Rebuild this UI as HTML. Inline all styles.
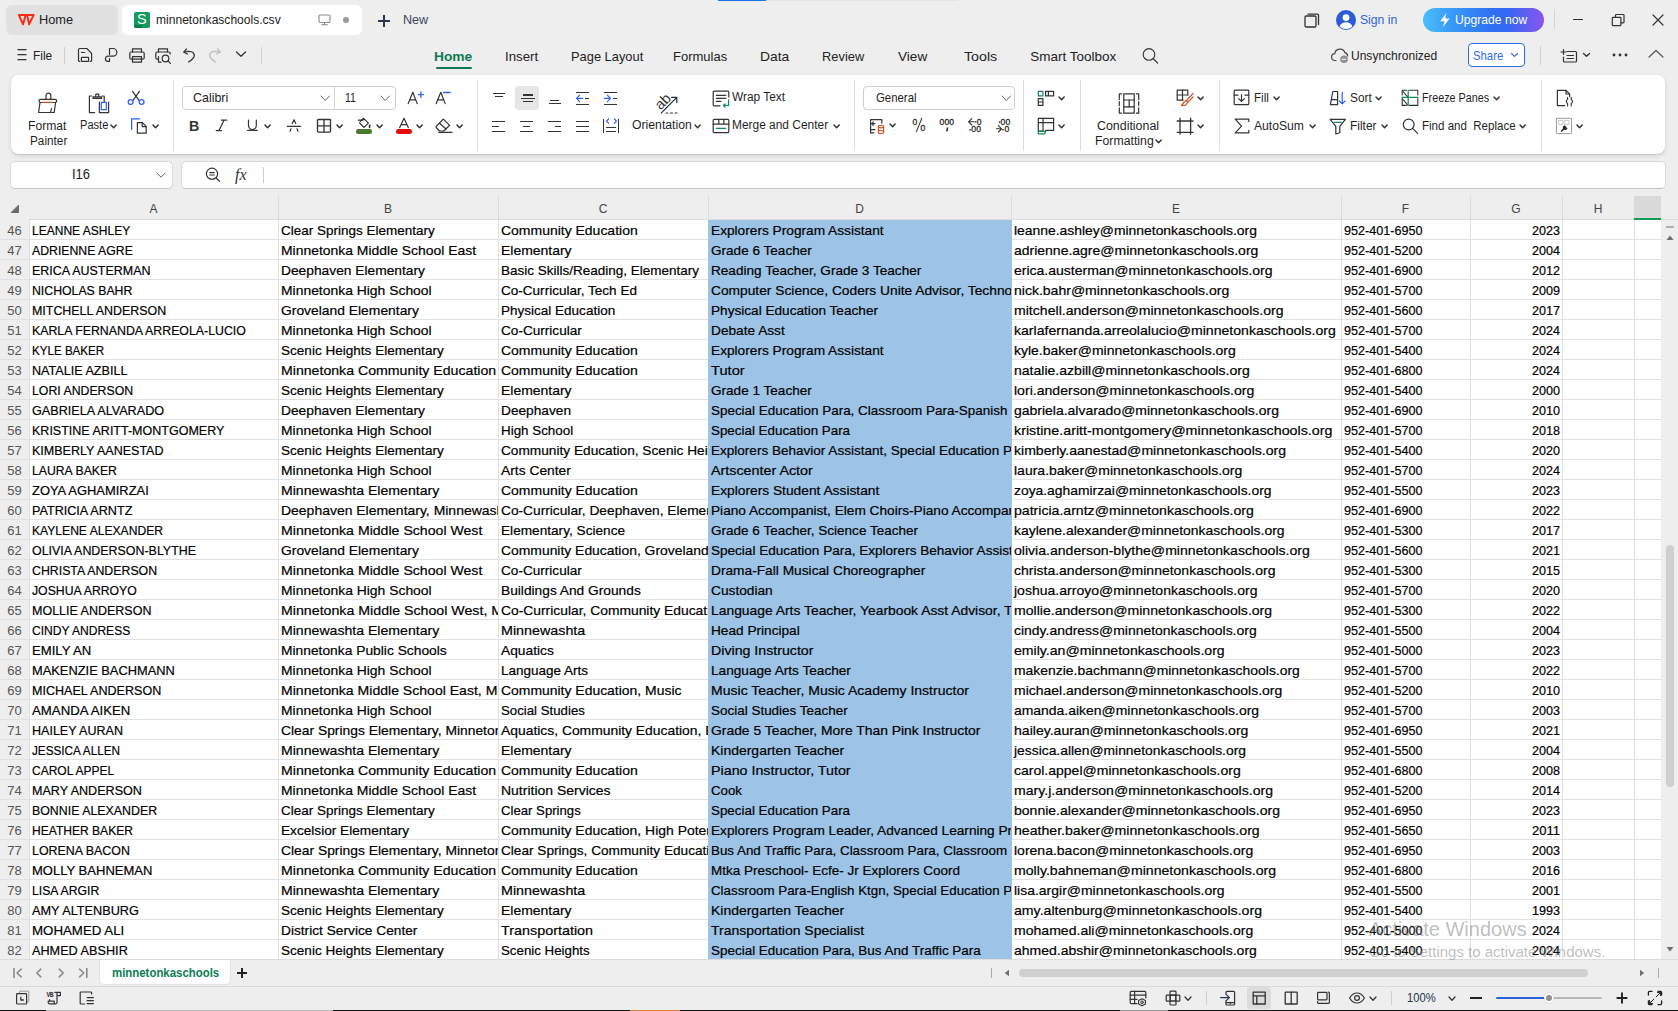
<!DOCTYPE html>
<html><head><meta charset="utf-8">
<style>
*{box-sizing:border-box;margin:0;padding:0}
html,body{width:1678px;height:1011px;overflow:hidden}
body{position:relative;background:#eeeeee;font-family:"Liberation Sans",sans-serif;color:#222}
.a{position:absolute}
svg{position:absolute;overflow:visible}
.t{position:absolute;white-space:pre;font-size:13px;color:#1f1f1f;line-height:1;transform-origin:0 0}
/* grid */
#grid{position:absolute;left:0;top:196px;width:1661px;height:764px;background:#fff;overflow:hidden}
.c{position:absolute;height:19px;overflow:hidden;white-space:nowrap}
.c span{position:absolute;left:2px;top:2px;font-size:13.5px;line-height:17px;color:#000;transform-origin:0 0;-webkit-text-stroke:0.2px #000}
.c span.r{left:auto;right:2px;transform-origin:100% 0}
.rh{position:absolute;left:0;width:29px;height:19px;text-align:center;font-size:13px;line-height:21px;color:#555}
.hl{position:absolute;left:0;width:1661px;height:1px;background:#e1e1e1}
.vl{position:absolute;top:0;width:1px;height:960px;background:#e1e1e1}
.ch{position:absolute;top:2px;height:23px;font-size:12px;line-height:23px;text-align:center;color:#444}
</style></head>
<body>
<div class="a" style="left:718px;top:0px;width:48px;height:1px;background:#1a73e8;"></div>
<div class="a" style="left:766px;top:0px;width:192px;height:1px;background:#e4e4e4;"></div>
<div class="a" style="left:6px;top:5px;width:112px;height:30px;background:#e1e1e1;border-radius:6px"></div>
<svg style="left:16px;top:12px;" width="20" height="16" viewBox="0 0 20 16" fill="none" stroke-linecap="round" stroke-linejoin="round"><path d="M2.9 3H9.6L7 12.4Z M11.2 3H17.6L13.1 12.4Z" stroke="#fa2a12" stroke-width="1.9"/></svg>
<div class="t" style="left:39.35px;top:13.00px;font-size:13px;color:#222;transform:scaleX(0.9851);">Home</div>
<div class="a" style="left:122px;top:5px;width:240px;height:30px;background:#fff;border-radius:6px"></div>
<div class="a" style="left:134px;top:12px;width:16px;height:16px;background:#139a5c;border-radius:2px"></div>
<div class="a" style="left:134px;top:25px;width:8px;height:3px;background:#0d7a47;border-radius:0 0 0 2px"></div>
<div class="t" style="left:137.10px;top:12.15px;font-size:14px;color:#fff;transform:scaleX(1.0338);">S</div>
<div class="t" style="left:155.85px;top:13.00px;font-size:13px;color:#222;transform:scaleX(0.9276);">minnetonkaschools.csv</div>
<svg style="left:318px;top:14px;" width="13" height="12" viewBox="0 0 13 12" fill="none" stroke-linecap="round" stroke-linejoin="round"><rect x="1" y="1" width="11" height="7.5" rx="1" stroke="#8a8a8a" stroke-width="1.1"/><path d="M6.5 8.5V10.5M3.5 10.8H9.5" stroke="#8a8a8a" stroke-width="1.1"/></svg>
<div class="a" style="left:343px;top:17px;width:6px;height:6px;background:#9a9a9a;border-radius:50%"></div>
<svg style="left:376px;top:13px;" width="16" height="16" viewBox="0 0 16 16" fill="none" stroke-linecap="round" stroke-linejoin="round"><path d="M8 2V14M2 8H14" stroke="#30364f" stroke-width="2" stroke-linecap="butt"/></svg>
<div class="t" style="left:403.35px;top:13.00px;font-size:13px;color:#3a4560;transform:scaleX(0.9675);">New</div>
<svg style="left:1303px;top:12px;" width="18" height="16" viewBox="0 0 18 16" fill="none" stroke-linecap="round" stroke-linejoin="round"><rect x="2" y="4" width="11" height="11" rx="1.2" stroke="#333" stroke-width="1.3"/><path d="M5 2.2H14.5A1 1 0 0 1 15.5 3.2V12.5" stroke="#333" stroke-width="1.3"/></svg>
<svg style="left:1335px;top:9px;" width="22" height="22" viewBox="0 0 22 22" fill="none" stroke-linecap="round" stroke-linejoin="round"><circle cx="11" cy="11" r="10" fill="#2b5bd8"/><circle cx="11" cy="8.6" r="3.4" fill="#fff"/><path d="M4.6 17.2C5.8 14.3 8 13.2 11 13.2S16.2 14.3 17.4 17.2C15.8 19 13.6 20 11 20S6.2 19 4.6 17.2Z" fill="#fff"/></svg>
<div class="t" style="left:1360.33px;top:12.57px;font-size:13.5px;color:#2e62d9;transform:scaleX(0.9015);">Sign in</div>
<div class="a" style="left:1423px;top:8px;width:121px;height:24px;background:linear-gradient(90deg,#48c0fb 0%,#3a9cf7 22%,#2f72f4 55%,#3466f3 70%,#8a56ef 100%);border-radius:12px"></div>
<svg style="left:1438px;top:12px;" width="14" height="16" viewBox="0 0 14 16" fill="none" stroke-linecap="round" stroke-linejoin="round"><path d="M8.6 0.8L2.2 9.2H6.6L4.8 15.2L11.6 6.4H7.2Z" fill="#fff"/></svg>
<div class="t" style="left:1455.33px;top:12.57px;font-size:13.5px;color:#fff;transform:scaleX(0.8992);">Upgrade now</div>
<div class="a" style="left:1554px;top:9px;width:1px;height:20px;background:#d3d3d3;"></div>
<div class="a" style="left:1573px;top:19px;width:10px;height:1.3px;background:#333;"></div>
<svg style="left:1610px;top:12px;" width="16" height="16" viewBox="0 0 16 16" fill="none" stroke-linecap="round" stroke-linejoin="round"><rect x="2.3" y="5.3" width="8.6" height="8.4" rx="0.8" stroke="#333" stroke-width="1.2"/><path d="M5.5 5.3V3.3A0.8 0.8 0 0 1 6.3 2.5H13.2A0.8 0.8 0 0 1 14 3.3V10A0.8 0.8 0 0 1 13.2 10.8H10.9" stroke="#333" stroke-width="1.2"/></svg>
<svg style="left:1651px;top:13px;" width="14" height="14" viewBox="0 0 14 14" fill="none" stroke-linecap="round" stroke-linejoin="round"><path d="M2 2L12 12M12 2L2 12" stroke="#333" stroke-width="1.2"/></svg>
<svg style="left:16px;top:47px;" width="12" height="15" viewBox="0 0 12 15" fill="none" stroke-linecap="round" stroke-linejoin="round"><path d="M2 2.6H10M2 7.7H10M2 12.7H10" stroke="#333" stroke-width="1.3"/></svg>
<div class="t" style="left:33.33px;top:48.57px;font-size:13.5px;color:#222;transform:scaleX(0.8828);">File</div>
<div class="a" style="left:64px;top:47px;width:1px;height:17px;background:#d0d0d0;"></div>
<svg style="left:76px;top:47px;" width="18" height="17" viewBox="0 0 18 17" fill="none" stroke-linecap="round" stroke-linejoin="round"><path d="M3.6 14.4H3.7A1.2 1.2 0 0 1 2.5 13.2V2.7A1.2 1.2 0 0 1 3.7 1.5H10.8L15.6 6.3V13.2A1.2 1.2 0 0 1 14.4 14.4H14.2" stroke="#333" stroke-width="1.2"/><rect x="5.4" y="10.4" width="7.2" height="4" rx="0.5" stroke="#333" stroke-width="1.2"/><path d="M5.4 5.5H8.6" stroke="#333" stroke-width="1.2"/></svg>
<svg style="left:103px;top:47px;" width="16" height="17" viewBox="0 0 16 17" fill="none" stroke-linecap="round" stroke-linejoin="round"><path d="M6.5 7.5V1.5H10A3.85 3.85 0 0 1 10 9.2H5A2.6 2.6 0 0 0 5 14.4H6.5V11.6" stroke="#333" stroke-width="1.2"/></svg>
<svg style="left:128px;top:47px;" width="18" height="17" viewBox="0 0 18 17" fill="none" stroke-linecap="round" stroke-linejoin="round"><path d="M4.5 5V1.8H13.5V5" stroke="#333" stroke-width="1.2"/><rect x="1.8" y="5" width="14.4" height="7.2" rx="1.5" stroke="#333" stroke-width="1.2"/><rect x="4.5" y="9.6" width="9" height="5.6" stroke="#333" stroke-width="1.2"/></svg>
<svg style="left:154px;top:47px;" width="19" height="18" viewBox="0 0 19 18" fill="none" stroke-linecap="round" stroke-linejoin="round"><path d="M4.5 5V1.8H13.5V5" stroke="#333" stroke-width="1.2"/><path d="M4.2 12.2H3.2A1.5 1.5 0 0 1 1.8 10.7V6.5A1.5 1.5 0 0 1 3.3 5H14.7A1.5 1.5 0 0 1 16.2 6.5V7" stroke="#333" stroke-width="1.2"/><path d="M4.5 9.6V15.2H7" stroke="#333" stroke-width="1.2"/><circle cx="11.5" cy="11.5" r="3.3" stroke="#333" stroke-width="1.2"/><path d="M13.9 13.9L16.4 16.4" stroke="#333" stroke-width="1.3"/></svg>
<svg style="left:182px;top:47px;" width="14" height="17" viewBox="0 0 14 17" fill="none" stroke-linecap="round" stroke-linejoin="round"><path d="M4.5 2L1.8 5.2L5.4 7" stroke="#333" stroke-width="1.2"/><path d="M2.2 5.2C8 3.2 12.5 5 12.3 8.6C12.2 11 10.4 12.4 6.6 15" stroke="#333" stroke-width="1.2"/></svg>
<svg style="left:208px;top:47px;" width="14" height="17" viewBox="0 0 14 17" fill="none" stroke-linecap="round" stroke-linejoin="round"><path d="M9.5 2L12.2 5.2L8.6 7" stroke="#b9b9b9" stroke-width="1.2"/><path d="M11.8 5.2C6 3.2 1.5 5 1.7 8.6C1.8 11 3.6 12.4 7.4 15" stroke="#b9b9b9" stroke-width="1.2"/></svg>
<svg style="left:235px;top:50px;" width="12" height="8" viewBox="0 0 12 8" fill="none" stroke-linecap="round" stroke-linejoin="round"><path d="M1.5 2L6 6.3L10.5 2" stroke="#333" stroke-width="1.3"/></svg>
<div class="a" style="left:261px;top:47px;width:1px;height:17px;background:#d0d0d0;"></div>
<div class="t" style="left:434.32px;top:49.57px;font-size:13.5px;color:#0c7a52;font-weight:bold;transform:scaleX(1.0186);">Home</div>
<div class="a" style="left:436px;top:67px;width:36px;height:2px;background:#0c7a52;border-radius:1px"></div>
<div class="t" style="left:505.32px;top:49.57px;font-size:13.5px;color:#222;transform:scaleX(0.9837);">Insert</div>
<div class="t" style="left:571.33px;top:49.57px;font-size:13.5px;color:#222;transform:scaleX(0.9525);">Page Layout</div>
<div class="t" style="left:673.33px;top:49.57px;font-size:13.5px;color:#222;transform:scaleX(0.9636);">Formulas</div>
<div class="t" style="left:760.33px;top:49.57px;font-size:13.5px;color:#222;transform:scaleX(1.0240);">Data</div>
<div class="t" style="left:822.33px;top:49.57px;font-size:13.5px;color:#222;transform:scaleX(0.9537);">Review</div>
<div class="t" style="left:898.33px;top:49.57px;font-size:13.5px;color:#222;transform:scaleX(1.0063);">View</div>
<div class="t" style="left:964.33px;top:49.57px;font-size:13.5px;color:#222;transform:scaleX(1.0539);">Tools</div>
<div class="t" style="left:1030.33px;top:49.57px;font-size:13.5px;color:#222;">Smart Toolbox</div>
<svg style="left:1141px;top:47px;" width="19" height="19" viewBox="0 0 19 19" fill="none" stroke-linecap="round" stroke-linejoin="round"><circle cx="8" cy="7.4" r="5.8" stroke="#333" stroke-width="1.1"/><path d="M12.2 11.6L16.6 16" stroke="#333" stroke-width="1.2"/></svg>
<svg style="left:1331px;top:46px;" width="20" height="18" viewBox="0 0 20 18" fill="none" stroke-linecap="round" stroke-linejoin="round"><path d="M5 14.5H4.2A3.4 3.4 0 0 1 3.8 7.7A5.2 5.2 0 0 1 13.9 6.6A3.6 3.6 0 0 1 16.6 10" stroke="#444" stroke-width="1.2"/><circle cx="13" cy="13.2" r="3.8" fill="#8f8f8f"/><path d="M11.2 13.2H14.8" stroke="#fff" stroke-width="1.1"/></svg>
<div class="t" style="left:1351.33px;top:48.57px;font-size:13.5px;color:#222;transform:scaleX(0.8905);">Unsynchronized</div>
<div class="a" style="left:1468px;top:43px;width:57px;height:24px;background:#fff;border:1.2px solid #2f6bf0;border-radius:4px"></div>
<div class="t" style="left:1473.33px;top:48.57px;font-size:13.5px;color:#2f6bf0;transform:scaleX(0.8386);">Share</div>
<svg style="left:1510px;top:52px;" width="9" height="6" viewBox="0 0 9 6" fill="none" stroke-linecap="round" stroke-linejoin="round"><path d="M1.5 1.5L4.5 4.3L7.5 1.5" stroke="#2f6bf0" stroke-width="1.1"/></svg>
<div class="a" style="left:1540px;top:46px;width:1px;height:19px;background:#d0d0d0;"></div>
<svg style="left:1560px;top:47px;" width="20" height="17" viewBox="0 0 20 17" fill="none" stroke-linecap="round" stroke-linejoin="round"><path d="M3.5 2.5V7.5M1 5H6" stroke="#333" stroke-width="1.2"/><path d="M7 4.5H15.5A1 1 0 0 1 16.5 5.5V14A1 1 0 0 1 15.5 15H4.5A1 1 0 0 1 3.5 14V10" stroke="#333" stroke-width="1.2"/><path d="M7 8.5H13.5M7 11.5H13.5" stroke="#333" stroke-width="1.2"/></svg>
<svg style="left:1582px;top:52px;" width="9" height="6" viewBox="0 0 9 6" fill="none" stroke-linecap="round" stroke-linejoin="round"><path d="M1.5 1.5L4.5 4.3L7.5 1.5" stroke="#333" stroke-width="1.3"/></svg>
<svg style="left:1611px;top:52px;" width="18" height="6" viewBox="0 0 18 6" fill="none" stroke-linecap="round" stroke-linejoin="round"><circle cx="3" cy="3" r="1.4" fill="#333"/><circle cx="9" cy="3" r="1.4" fill="#333"/><circle cx="15" cy="3" r="1.4" fill="#333"/></svg>
<svg style="left:1647px;top:49px;" width="18" height="10" viewBox="0 0 18 10" fill="none" stroke-linecap="round" stroke-linejoin="round"><path d="M2 8L9 1.5L16 8" stroke="#555" stroke-width="1.2"/></svg>

<div class="a" style="left:11px;top:75px;width:1654px;height:79px;background:#fff;border-radius:8px;box-shadow:0 1px 1px rgba(0,0,0,0.10),0 2px 5px rgba(0,0,0,0.10)"></div>
<div class="a" style="left:0;top:0.8px;width:1678px;height:160px">
<svg style="left:36px;top:90px;" width="24" height="24" viewBox="0 0 24 24" fill="none" stroke-linecap="round" stroke-linejoin="round"><path d="M10 8.2V4.5A2.4 2.4 0 0 1 14.8 4.5V8.2" stroke="#333" stroke-width="1.2"/><rect x="3" y="8.3" width="17.6" height="3.2" rx="1.4" stroke="#333" stroke-width="1.2"/><path d="M4 11.5L2.6 21.5H18.2L19.6 11.5" stroke="#333" stroke-width="1.2"/><path d="M15.5 17.6L14.6 21.3" stroke="#333" stroke-width="1.2"/><path d="M7 11.4H16.4" stroke="#d2501c" stroke-width="1.2"/></svg>
<div class="t" style="left:28.07px;top:119.42px;font-size:12.5px;color:#1f1f1f;transform:scaleX(0.9705);">Format</div>
<div class="t" style="left:30.07px;top:134.42px;font-size:12.5px;color:#1f1f1f;transform:scaleX(0.9423);">Painter</div>
<svg style="left:87px;top:90px;" width="24" height="24" viewBox="0 0 24 24" fill="none" stroke-linecap="round" stroke-linejoin="round"><path d="M4.6 5H2.4V21.6H7.6" stroke="#333" stroke-width="1.2"/><path d="M15.2 5H17.2V10.8" stroke="#333" stroke-width="1.2"/><path d="M6 5.8H14.6V7.4H6Z" stroke="#333" stroke-width="1.2"/><path d="M8.8 5.4V3.2H11.8V5.4" stroke="#333" stroke-width="1.2"/><path d="M12.4 11V21.6H21.6V11" stroke="#333" stroke-width="1.2"/><rect x="14.3" y="11.4" width="5" height="7.3" stroke="#2962ff" stroke-width="1.2"/></svg>
<div class="t" style="left:80.17px;top:118.42px;font-size:12.5px;color:#1f1f1f;transform:scaleX(0.8860);">Paste</div>
<svg style="left:110.2px;top:123px;" width="7.2" height="4.8" viewBox="0 0 7.2 4.8" fill="none" stroke-linecap="round" stroke-linejoin="round"><path d="M1 1L3.6 3.8L6.2 1" stroke="#333" stroke-width="1.45"/></svg>
<svg style="left:127px;top:88px;" width="18" height="18" viewBox="0 0 18 18" fill="none" stroke-linecap="round" stroke-linejoin="round"><path d="M5.6 2.3L11.8 11.2M12.4 2.3L6.2 11.2" stroke="#333" stroke-width="1.2"/><circle cx="3.6" cy="13" r="2.4" stroke="#2962ff" stroke-width="1.3"/><circle cx="14.6" cy="13" r="2.4" stroke="#2962ff" stroke-width="1.3"/></svg>
<svg style="left:129px;top:115px;" width="20" height="20" viewBox="0 0 20 20" fill="none" stroke-linecap="round" stroke-linejoin="round"><path d="M2.6 13.6V2.8H10.6" stroke="#2962ff" stroke-width="1.3"/><path d="M8.4 6.6H13.4L17.2 10.4V17.2H8.4Z" stroke="#333" stroke-width="1.2"/><path d="M13.2 6.8V10.6H17" stroke="#333" stroke-width="1.2"/></svg>
<svg style="left:151.7px;top:123.2px;" width="7.2" height="4.8" viewBox="0 0 7.2 4.8" fill="none" stroke-linecap="round" stroke-linejoin="round"><path d="M1 1L3.6 3.8L6.2 1" stroke="#333" stroke-width="1.45"/></svg>
<div class="a" style="left:173px;top:79px;width:1px;height:71px;background:#dedede;"></div>
<div class="a" style="left:182px;top:85px;width:214px;height:24px;background:#fff;border:1px solid #cfcfcf;border-radius:4px"></div>
<div class="a" style="left:334px;top:86px;width:1px;height:22px;background:#d6d6d6;"></div>
<div class="t" style="left:193.32px;top:90.57px;font-size:13.5px;color:#222;transform:scaleX(0.9203);">Calibri</div>
<svg style="left:319.6px;top:93.8px;" width="10.5" height="6.5" viewBox="0 0 10.5 6.5" fill="none" stroke-linecap="round" stroke-linejoin="round"><path d="M1 1L5.25 5.5L9.5 1" stroke="#666" stroke-width="1"/></svg>
<div class="t" style="left:345.12px;top:90.57px;font-size:13.5px;color:#222;transform:scaleX(0.7716);">11</div>
<svg style="left:379.9px;top:93.8px;" width="10.5" height="6.5" viewBox="0 0 10.5 6.5" fill="none" stroke-linecap="round" stroke-linejoin="round"><path d="M1 1L5.25 5.5L9.5 1" stroke="#666" stroke-width="1"/></svg>
<svg style="left:406px;top:88px;" width="18" height="17" viewBox="0 0 18 17" fill="none" stroke-linecap="round" stroke-linejoin="round"><path d="M2.2 14.6L6.8 3.3L11.2 14.6M3.8 10.8H9.8" stroke="#333" stroke-width="1.2"/><path d="M12.4 5.6H17.4M14.9 3V8.4" stroke="#2962ff" stroke-width="1.3"/></svg>
<svg style="left:434px;top:88px;" width="18" height="17" viewBox="0 0 18 17" fill="none" stroke-linecap="round" stroke-linejoin="round"><path d="M2.2 14.6L6.8 3.3L11.2 14.6M3.8 10.8H9.8" stroke="#333" stroke-width="1.2"/><path d="M9.6 3.5H16.2" stroke="#2962ff" stroke-width="1.3"/></svg>
<div class="t" style="left:188.88px;top:117.73px;font-size:14.5px;color:#333;font-weight:bold;transform:scaleX(0.9829);">B</div>
<svg style="left:214px;top:117px;" width="15" height="15" viewBox="0 0 15 15" fill="none" stroke-linecap="round" stroke-linejoin="round"><path d="M7.3 2.2H12.8M2.2 12.6H7.6M10 2.2L5 12.6" stroke="#333" stroke-width="1.2"/></svg>
<svg style="left:246px;top:117px;" width="13" height="15" viewBox="0 0 13 15" fill="none" stroke-linecap="round" stroke-linejoin="round"><path d="M2.5 2V7.6A3.9 3.9 0 0 0 10.3 7.6V2" stroke="#333" stroke-width="1.2"/><path d="M1.5 12.3H11.3" stroke="#333" stroke-width="1.2"/></svg>
<svg style="left:263.9px;top:122.9px;" width="7.2" height="4.8" viewBox="0 0 7.2 4.8" fill="none" stroke-linecap="round" stroke-linejoin="round"><path d="M1 1L3.6 3.8L6.2 1" stroke="#333" stroke-width="1.45"/></svg>
<svg style="left:286px;top:117px;" width="16" height="16" viewBox="0 0 16 16" fill="none" stroke-linecap="round" stroke-linejoin="round"><path d="M6.2 5.5L8 1.8L9.8 5.5M1.4 8.4H14.6M5 10.8L4 13.2M11 10.8L12 13.2" stroke="#333" stroke-width="1.2"/></svg>
<svg style="left:316px;top:117px;" width="16" height="16" viewBox="0 0 16 16" fill="none" stroke-linecap="round" stroke-linejoin="round"><rect x="1.5" y="1.5" width="13" height="12.6" rx="0.8" stroke="#333" stroke-width="1.3"/><path d="M8 1.5V14.1M1.5 7.8H14.5" stroke="#333" stroke-width="1.3"/></svg>
<svg style="left:336px;top:123px;" width="7.2" height="4.8" viewBox="0 0 7.2 4.8" fill="none" stroke-linecap="round" stroke-linejoin="round"><path d="M1 1L3.6 3.8L6.2 1" stroke="#333" stroke-width="1.45"/></svg>
<svg style="left:355px;top:115px;" width="18" height="13" viewBox="0 0 18 13" fill="none" stroke-linecap="round" stroke-linejoin="round"><path d="M5.2 5.5L8.6 2.3L13.4 7.1L9 11.4L4.6 7" stroke="#333" stroke-width="1.2"/><path d="M3.3 4.2H8" stroke="#333" stroke-width="1.2"/><path d="M14.6 9.3V11.4" stroke="#333" stroke-width="1.6"/></svg>
<div class="a" style="left:356px;top:128.2px;width:16px;height:4.6px;background:#4a7a2c;border-radius:2.3px"></div>
<svg style="left:376px;top:123px;" width="7.2" height="4.8" viewBox="0 0 7.2 4.8" fill="none" stroke-linecap="round" stroke-linejoin="round"><path d="M1 1L3.6 3.8L6.2 1" stroke="#333" stroke-width="1.45"/></svg>
<svg style="left:397px;top:115px;" width="14" height="13" viewBox="0 0 14 13" fill="none" stroke-linecap="round" stroke-linejoin="round"><path d="M2.6 11.7L7 2.2L11.4 11.7M4.2 8.6H9.8" stroke="#333" stroke-width="1.2"/></svg>
<div class="a" style="left:396px;top:128.2px;width:16px;height:4.6px;background:#e80a0a;border-radius:2.3px"></div>
<svg style="left:416.2px;top:123px;" width="7.2" height="4.8" viewBox="0 0 7.2 4.8" fill="none" stroke-linecap="round" stroke-linejoin="round"><path d="M1 1L3.6 3.8L6.2 1" stroke="#333" stroke-width="1.45"/></svg>
<svg style="left:434px;top:116px;" width="20" height="18" viewBox="0 0 20 18" fill="none" stroke-linecap="round" stroke-linejoin="round"><path d="M9.6 2.3L15.6 8.3L9.8 14H5.6L2.6 11A1.4 1.4 0 0 1 2.6 9L9 2.3A0.8 0.8 0 0 1 9.6 2.3Z" stroke="#333" stroke-width="1.2"/><path d="M5.6 6.2L12 12" stroke="#333" stroke-width="1.2"/><path d="M4.8 15.4H18" stroke="#333" stroke-width="1.2"/></svg>
<svg style="left:456.2px;top:123px;" width="7.2" height="4.8" viewBox="0 0 7.2 4.8" fill="none" stroke-linecap="round" stroke-linejoin="round"><path d="M1 1L3.6 3.8L6.2 1" stroke="#333" stroke-width="1.45"/></svg>
<div class="a" style="left:477px;top:79px;width:1px;height:71px;background:#dedede;"></div>
<div class="a" style="left:515px;top:85px;width:24px;height:24px;background:#e6e6e6;border-radius:4px"></div>
<div class="a" style="left:493px;top:91.9px;width:12px;height:1.2px;background:#333;"></div>
<div class="a" style="left:495px;top:94.9px;width:8px;height:1.2px;background:#333;"></div>
<div class="a" style="left:523px;top:93.60000000000001px;width:10px;height:1.2px;background:#333;"></div>
<div class="a" style="left:521px;top:96.80000000000001px;width:14px;height:1.2px;background:#333;"></div>
<div class="a" style="left:523px;top:99.9px;width:10px;height:1.2px;background:#333;"></div>
<div class="a" style="left:550px;top:98.80000000000001px;width:9px;height:1.2px;background:#333;"></div>
<div class="a" style="left:549px;top:101.80000000000001px;width:12px;height:1.2px;background:#333;"></div>
<div class="a" style="left:576px;top:90.80000000000001px;width:13px;height:1.2px;background:#333;"></div>
<div class="a" style="left:585px;top:96.80000000000001px;width:4px;height:1.2px;background:#333;"></div>
<div class="a" style="left:576px;top:102.80000000000001px;width:13px;height:1.2px;background:#333;"></div>
<svg style="left:575px;top:93px;" width="10" height="9" viewBox="0 0 10 9" fill="none" stroke-linecap="round" stroke-linejoin="round"><path d="M4.6 1.2L1.6 4.4L4.6 7.6M1.6 4.4H7.6" stroke="#2962ff" stroke-width="1.2"/></svg>
<div class="a" style="left:604px;top:90.80000000000001px;width:13px;height:1.2px;background:#333;"></div>
<div class="a" style="left:613px;top:96.80000000000001px;width:4px;height:1.2px;background:#333;"></div>
<div class="a" style="left:604px;top:102.80000000000001px;width:13px;height:1.2px;background:#333;"></div>
<svg style="left:603px;top:93px;" width="10" height="9" viewBox="0 0 10 9" fill="none" stroke-linecap="round" stroke-linejoin="round"><path d="M4.4 1.2L7.4 4.4L4.4 7.6M1.4 4.4H7.4" stroke="#2962ff" stroke-width="1.2"/></svg>
<div class="a" style="left:492px;top:119.80000000000001px;width:13px;height:1.2px;background:#333;"></div>
<div class="a" style="left:492px;top:124.9px;width:7px;height:1.2px;background:#333;"></div>
<div class="a" style="left:492px;top:129.9px;width:13px;height:1.2px;background:#333;"></div>
<div class="a" style="left:520px;top:119.80000000000001px;width:13px;height:1.2px;background:#333;"></div>
<div class="a" style="left:523px;top:124.9px;width:7px;height:1.2px;background:#333;"></div>
<div class="a" style="left:520px;top:129.9px;width:13px;height:1.2px;background:#333;"></div>
<div class="a" style="left:548px;top:119.80000000000001px;width:13px;height:1.2px;background:#333;"></div>
<div class="a" style="left:555px;top:124.9px;width:6px;height:1.2px;background:#333;"></div>
<div class="a" style="left:548px;top:129.9px;width:13px;height:1.2px;background:#333;"></div>
<div class="a" style="left:576px;top:119.80000000000001px;width:13px;height:1.2px;background:#333;"></div>
<div class="a" style="left:576px;top:124.9px;width:13px;height:1.2px;background:#333;"></div>
<div class="a" style="left:576px;top:129.9px;width:13px;height:1.2px;background:#333;"></div>
<div class="a" style="left:603px;top:118px;width:1.2px;height:14px;background:#333;"></div>
<div class="a" style="left:618px;top:118px;width:1.2px;height:14px;background:#333;"></div>
<div class="a" style="left:606px;top:125.9px;width:10px;height:1.2px;background:#333;"></div>
<div class="a" style="left:606px;top:129.9px;width:10px;height:1.2px;background:#333;"></div>
<svg style="left:605px;top:117px;" width="13" height="7" viewBox="0 0 13 7" fill="none" stroke-linecap="round" stroke-linejoin="round"><path d="M3.6 1L1.6 3.2L3.6 5.4M9.4 1L11.4 3.2L9.4 5.4" stroke="#2962ff" stroke-width="1.2"/></svg>
<svg style="left:653px;top:88px;" width="28" height="28" viewBox="0 0 28 28" fill="none" stroke-linecap="round" stroke-linejoin="round"><text x="0" y="0" transform="translate(7.6 21.6) rotate(-45)" font-family="Liberation Sans" font-size="14.5" fill="#333">ab</text><path d="M8.4 23.8L23.8 8.4M18.6 8.4H23.8V13.6" stroke="#1f2a44" stroke-width="1.2"/><path d="M13 24H15M17.5 24H19.5M22 24H24" stroke="#333" stroke-width="1.2"/></svg>
<div class="t" style="left:631.98px;top:118.42px;font-size:12.5px;color:#1f1f1f;transform:scaleX(0.9782);">Orientation</div>
<svg style="left:694.2px;top:123px;" width="7.2" height="4.8" viewBox="0 0 7.2 4.8" fill="none" stroke-linecap="round" stroke-linejoin="round"><path d="M1 1L3.6 3.8L6.2 1" stroke="#333" stroke-width="1.45"/></svg>
<svg style="left:711px;top:88px;" width="20" height="19" viewBox="0 0 20 19" fill="none" stroke-linecap="round" stroke-linejoin="round"><path d="M9 16.8H3.2A1 1 0 0 1 2.2 15.8V3.2A1 1 0 0 1 3.2 2.2H16.8A1 1 0 0 1 17.8 3.2V8" stroke="#333" stroke-width="1.2"/><path d="M5.4 6.4H14.8M5.4 9.4H14.8M5.4 12.4H10" stroke="#333" stroke-width="1.2"/><path d="M17.6 10.8V16.4H12.4M14 14.8L12.4 16.4L14 18" stroke="#118a55" stroke-width="1.2"/></svg>
<div class="t" style="left:732.38px;top:90.42px;font-size:12.5px;color:#1f1f1f;transform:scaleX(0.9518);">Wrap Text</div>
<svg style="left:711px;top:116px;" width="20" height="18" viewBox="0 0 20 18" fill="none" stroke-linecap="round" stroke-linejoin="round"><rect x="2.2" y="2.4" width="15.6" height="13.2" rx="1" stroke="#333" stroke-width="1.2"/><path d="M2.2 7.2H17.8M7.8 2.4V7.2M12.8 2.4V7.2" stroke="#333" stroke-width="1.2"/><path d="M5.2 11.3H14.8" stroke="#118a55" stroke-width="1.2"/></svg>
<div class="t" style="left:732.38px;top:118.42px;font-size:12.5px;color:#1f1f1f;transform:scaleX(0.9539);">Merge and Center</div>
<svg style="left:833px;top:123px;" width="7.2" height="4.8" viewBox="0 0 7.2 4.8" fill="none" stroke-linecap="round" stroke-linejoin="round"><path d="M1 1L3.6 3.8L6.2 1" stroke="#333" stroke-width="1.45"/></svg>
<div class="a" style="left:854px;top:79px;width:1px;height:71px;background:#dedede;"></div>
<div class="a" style="left:863px;top:85px;width:152px;height:24px;background:#fff;border:1px solid #cfcfcf;border-radius:4px"></div>
<div class="t" style="left:875.73px;top:90.57px;font-size:13.5px;color:#222;transform:scaleX(0.8435);">General</div>
<svg style="left:1000.6px;top:94.1px;" width="10.5" height="6.5" viewBox="0 0 10.5 6.5" fill="none" stroke-linecap="round" stroke-linejoin="round"><path d="M1 1L5.25 5.5L9.5 1" stroke="#666" stroke-width="1"/></svg>
<svg style="left:868px;top:116px;" width="18" height="18" viewBox="0 0 18 18" fill="none" stroke-linecap="round" stroke-linejoin="round"><path d="M6 15.8H2.6V2.6H13.8V6.2" stroke="#333" stroke-width="1.2"/><path d="M5 4.8V8.6M3.1 6.7H6.9M3.1 12.6H6.9" stroke="#333" stroke-width="1.2"/><ellipse cx="13" cy="9.6" rx="2.6" ry="1.3" stroke="#d2501c" stroke-width="1.1"/><path d="M10.4 9.6V15.4A2.6 1.3 0 0 0 15.6 15.4V9.6M10.4 12.5A2.6 1.3 0 0 0 15.6 12.5" stroke="#d2501c" stroke-width="1.1"/></svg>
<svg style="left:889.4px;top:122.5px;" width="7.2" height="4.8" viewBox="0 0 7.2 4.8" fill="none" stroke-linecap="round" stroke-linejoin="round"><path d="M1 1L3.6 3.8L6.2 1" stroke="#333" stroke-width="1.45"/></svg>
<svg style="left:905px;top:113.2px;" width="110" height="22" viewBox="0 0 110 22" fill="none" stroke-linecap="round" stroke-linejoin="round"><text x="7.6" y="10.5" font-family="Liberation Sans" font-size="8.6" fill="#2a2a2a" stroke="#2a2a2a" stroke-width="0.3">0</text><text x="15.6" y="17" font-family="Liberation Sans" font-size="8.6" fill="#2a2a2a" stroke="#2a2a2a" stroke-width="0.3">0</text><path d="M16.8 4.4L11.4 17.6" stroke="#333" stroke-width="1.1"/><text x="34.6" y="10.5" font-family="Liberation Sans" font-size="8.6" fill="#2a2a2a" stroke="#2a2a2a" stroke-width="0.3" letter-spacing="0.1">000</text><path d="M42.4 13.4V15.4L41.6 17.4" stroke="#333" stroke-width="1.6" stroke-linecap="butt"/><path d="M66.8 4.6L63.6 7.8L66.8 11M63.8 7.8H69" stroke="#333" stroke-width="1.1"/><rect x="69.9" y="7.1" width="1.5" height="1.5" fill="#333"/><text x="71.8" y="10.5" font-family="Liberation Sans" font-size="8.6" fill="#2a2a2a" stroke="#2a2a2a" stroke-width="0.3">0</text><rect x="64.3" y="15" width="1.5" height="1.5" fill="#333"/><text x="66.3" y="18.3" font-family="Liberation Sans" font-size="8.6" fill="#2a2a2a" stroke="#2a2a2a" stroke-width="0.3" letter-spacing="0.1">00</text><rect x="93.8" y="7.3" width="1.5" height="1.5" fill="#333"/><text x="95.6" y="10.5" font-family="Liberation Sans" font-size="8.6" fill="#2a2a2a" stroke="#2a2a2a" stroke-width="0.3" letter-spacing="0.1">00</text><path d="M93.4 11.6L96.6 14.8L93.4 18M91.4 14.8H96.4" stroke="#333" stroke-width="1.1"/><rect x="97.3" y="15" width="1.5" height="1.5" fill="#333"/><text x="99.6" y="18.3" font-family="Liberation Sans" font-size="8.6" fill="#2a2a2a" stroke="#2a2a2a" stroke-width="0.3">0</text></svg>
<div class="a" style="left:1023px;top:79px;width:1px;height:71px;background:#dedede;"></div>
<svg style="left:1036px;top:88px;" width="20" height="18" viewBox="0 0 20 18" fill="none" stroke-linecap="round" stroke-linejoin="round"><rect x="2.3" y="2.3" width="4.6" height="4.6" stroke="#118a55" stroke-width="1.2"/><path d="M9.6 2.3H17.6V6.9H9.6ZM12.4 2.3V6.9M2.3 9.6V16.4H6.9V9.6ZM2.3 13H6.9" stroke="#333" stroke-width="1.2"/></svg>
<svg style="left:1058.3px;top:94.8px;" width="7.2" height="4.8" viewBox="0 0 7.2 4.8" fill="none" stroke-linecap="round" stroke-linejoin="round"><path d="M1 1L3.6 3.8L6.2 1" stroke="#333" stroke-width="1.45"/></svg>
<svg style="left:1036px;top:115px;" width="20" height="20" viewBox="0 0 20 20" fill="none" stroke-linecap="round" stroke-linejoin="round"><path d="M7 15H2.3V2.3H17.6V14.4H9.6" stroke="#333" stroke-width="1.2"/><path d="M2.3 6.6H17.6M7 2.3V15" stroke="#333" stroke-width="1.2"/><path d="M2.3 15.4V17.8H8.6L9.6 15.4Z" stroke="#118a55" stroke-width="1.2"/></svg>
<svg style="left:1058.3px;top:122.8px;" width="7.2" height="4.8" viewBox="0 0 7.2 4.8" fill="none" stroke-linecap="round" stroke-linejoin="round"><path d="M1 1L3.6 3.8L6.2 1" stroke="#333" stroke-width="1.45"/></svg>
<div class="a" style="left:1080px;top:79px;width:1px;height:71px;background:#dedede;"></div>
<svg style="left:1117px;top:91px;" width="24" height="23" viewBox="0 0 24 23" fill="none" stroke-linecap="round" stroke-linejoin="round"><path d="M4.6 1.8H2.3V7.4M2.3 9.6V13.6M2.3 15.8V21.2H4.6M19.4 1.8H21.7V7.4M21.7 9.6V13.6M21.7 15.8V21.2H19.4" stroke="#333" stroke-width="1.2"/><rect x="6.8" y="1.8" width="10.4" height="6.2" stroke="#333" stroke-width="1.2"/><rect x="6.8" y="14.8" width="10.4" height="6.4" stroke="#333" stroke-width="1.2"/><path d="M6.8 8V14.8M12.2 8V14.8M17.2 8V14.8" stroke="#333" stroke-width="1.2"/></svg>
<div class="t" style="left:1096.88px;top:119.42px;font-size:12.5px;color:#1f1f1f;transform:scaleX(0.9917);">Conditional</div>
<div class="t" style="left:1095.17px;top:134.42px;font-size:12.5px;color:#1f1f1f;transform:scaleX(0.9828);">Formatting</div>
<svg style="left:1154.9px;top:138.5px;" width="7.2" height="4.8" viewBox="0 0 7.2 4.8" fill="none" stroke-linecap="round" stroke-linejoin="round"><path d="M1 1L3.6 3.8L6.2 1" stroke="#333" stroke-width="1.45"/></svg>
<svg style="left:1175px;top:87px;" width="20" height="20" viewBox="0 0 20 20" fill="none" stroke-linecap="round" stroke-linejoin="round"><path d="M8 12.2H2.2V2.2H12.8V7" stroke="#333" stroke-width="1.2"/><path d="M2.2 7H12.8M7.5 2.2V12.2" stroke="#333" stroke-width="1.2"/><path d="M18 5.5L11 12.8M18 9L13.4 13.6" stroke="#d2501c" stroke-width="1.2"/><path d="M11 12.8L8.6 14.6L6.6 17.6L10.2 17.2L13.4 13.6Z" stroke="#d2501c" stroke-width="1.2"/></svg>
<svg style="left:1197px;top:95.2px;" width="7.2" height="4.8" viewBox="0 0 7.2 4.8" fill="none" stroke-linecap="round" stroke-linejoin="round"><path d="M1 1L3.6 3.8L6.2 1" stroke="#333" stroke-width="1.45"/></svg>
<svg style="left:1175px;top:115px;" width="20" height="20" viewBox="0 0 20 20" fill="none" stroke-linecap="round" stroke-linejoin="round"><path d="M2.2 5H18M2.2 16.4H18M5 2.2V18.2M15.6 2.2V18.2" stroke="#333" stroke-width="1.3"/></svg>
<svg style="left:1197px;top:123px;" width="7.2" height="4.8" viewBox="0 0 7.2 4.8" fill="none" stroke-linecap="round" stroke-linejoin="round"><path d="M1 1L3.6 3.8L6.2 1" stroke="#333" stroke-width="1.45"/></svg>
<div class="a" style="left:1219px;top:79px;width:1px;height:71px;background:#dedede;"></div>
<svg style="left:1232px;top:87px;" width="19" height="19" viewBox="0 0 19 19" fill="none" stroke-linecap="round" stroke-linejoin="round"><rect x="2.2" y="2.2" width="14.6" height="14.4" rx="0.8" stroke="#333" stroke-width="1.2"/><path d="M2.2 7.2H6M13 7.2H16.8M9.5 6.6V13.4M6.6 10.6L9.5 13.4L12.4 10.6" stroke="#333" stroke-width="1.2"/></svg>
<div class="t" style="left:1254.15px;top:90.00px;font-size:13px;color:#1f1f1f;transform:scaleX(0.8953);">Fill</div>
<svg style="left:1273.4px;top:94.8px;" width="7.2" height="4.8" viewBox="0 0 7.2 4.8" fill="none" stroke-linecap="round" stroke-linejoin="round"><path d="M1 1L3.6 3.8L6.2 1" stroke="#333" stroke-width="1.45"/></svg>
<svg style="left:1233px;top:116px;" width="18" height="18" viewBox="0 0 18 18" fill="none" stroke-linecap="round" stroke-linejoin="round"><path d="M15.8 4.6V2.2H2.2L8.6 9.2L2.2 15.8H15.8V13.4" stroke="#333" stroke-width="1.2"/></svg>
<div class="t" style="left:1253.85px;top:118.00px;font-size:13px;color:#1f1f1f;transform:scaleX(0.9343);">AutoSum</div>
<svg style="left:1308.8px;top:122.9px;" width="7.2" height="4.8" viewBox="0 0 7.2 4.8" fill="none" stroke-linecap="round" stroke-linejoin="round"><path d="M1 1L3.6 3.8L6.2 1" stroke="#333" stroke-width="1.45"/></svg>
<svg style="left:1329px;top:89px;" width="19" height="17" viewBox="0 0 19 17" fill="none" stroke-linecap="round" stroke-linejoin="round"><path d="M1.4 14.6L3.8 1.5H8.6V14.6ZM2.4 9.6H8.6" stroke="#333" stroke-width="1.2"/><path d="M13.2 2.2V13.8M10.4 11L13.2 13.8L16 11" stroke="#2962ff" stroke-width="1.2"/></svg>
<div class="t" style="left:1349.65px;top:90.00px;font-size:13px;color:#1f1f1f;transform:scaleX(0.9130);">Sort</div>
<svg style="left:1375.3px;top:94.8px;" width="7.2" height="4.8" viewBox="0 0 7.2 4.8" fill="none" stroke-linecap="round" stroke-linejoin="round"><path d="M1 1L3.6 3.8L6.2 1" stroke="#333" stroke-width="1.45"/></svg>
<svg style="left:1329px;top:117px;" width="19" height="17" viewBox="0 0 19 17" fill="none" stroke-linecap="round" stroke-linejoin="round"><path d="M1.2 1.3H16.4L10.8 8.4V14.8L6.8 16V8.4Z" stroke="#333" stroke-width="1.2"/><path d="M5.4 4.4H12.2" stroke="#118a55" stroke-width="1.2"/></svg>
<div class="t" style="left:1349.85px;top:118.00px;font-size:13px;color:#1f1f1f;transform:scaleX(0.9162);">Filter</div>
<svg style="left:1380.7px;top:122.9px;" width="7.2" height="4.8" viewBox="0 0 7.2 4.8" fill="none" stroke-linecap="round" stroke-linejoin="round"><path d="M1 1L3.6 3.8L6.2 1" stroke="#333" stroke-width="1.45"/></svg>
<svg style="left:1400px;top:87px;" width="20" height="20" viewBox="0 0 20 20" fill="none" stroke-linecap="round" stroke-linejoin="round"><path d="M2.2 2.2H6.5M9.5 2.2H17.8V7M17.8 10.5V17.4H9.5M6.5 17.4H2.2V10.5M2.2 7V2.2" stroke="#333" stroke-width="1.1"/><path d="M2.6 3L7.6 8.8M2.6 11L7.6 16.8" stroke="#333" stroke-width="1.1"/><path d="M8.2 2V17.6M2 9.4H17.8" stroke="#118a55" stroke-width="1.2"/></svg>
<div class="t" style="left:1422.25px;top:90.00px;font-size:13px;color:#1f1f1f;transform:scaleX(0.8287);">Freeze Panes</div>
<svg style="left:1493.2px;top:94.8px;" width="7.2" height="4.8" viewBox="0 0 7.2 4.8" fill="none" stroke-linecap="round" stroke-linejoin="round"><path d="M1 1L3.6 3.8L6.2 1" stroke="#333" stroke-width="1.45"/></svg>
<svg style="left:1401px;top:115px;" width="20" height="20" viewBox="0 0 20 20" fill="none" stroke-linecap="round" stroke-linejoin="round"><circle cx="7.7" cy="8.5" r="5.4" stroke="#333" stroke-width="1.2"/><path d="M11.6 12.4L16.6 17.4" stroke="#333" stroke-width="1.2"/></svg>
<div class="t" style="left:1422.25px;top:118.00px;font-size:13px;color:#1f1f1f;transform:scaleX(0.8868);">Find and  Replace</div>
<svg style="left:1519.2px;top:122.8px;" width="7.2" height="4.8" viewBox="0 0 7.2 4.8" fill="none" stroke-linecap="round" stroke-linejoin="round"><path d="M1 1L3.6 3.8L6.2 1" stroke="#333" stroke-width="1.45"/></svg>
<div class="a" style="left:1541px;top:79px;width:1px;height:71px;background:#dedede;"></div>
<svg style="left:1555px;top:87px;" width="20" height="20" viewBox="0 0 20 20" fill="none" stroke-linecap="round" stroke-linejoin="round"><path d="M9.8 17.6H2.4V2.4H11L14.6 6V8.6" stroke="#333" stroke-width="1.2"/><path d="M11 2.4V6H14.6" stroke="#333" stroke-width="1.2"/><path d="M12.6 9.2V11.4A2.2 2.2 0 0 0 12.6 15.4V18M16.2 9.2V11.4A2.2 2.2 0 0 1 16.2 15.4V18" stroke="#333" stroke-width="1.1"/></svg>
<svg style="left:1554px;top:115px;" width="20" height="20" viewBox="0 0 20 20" fill="none" stroke-linecap="round" stroke-linejoin="round"><path d="M2.4 2.3H17.6V17.6H2.4Z" stroke="#9a9a9a" stroke-width="1" stroke-dasharray="14 1.5"/><rect x="5" y="4.4" width="4" height="4" stroke="#c8c8c8" stroke-width="1"/><rect x="11" y="4.4" width="4" height="4" stroke="#c8c8c8" stroke-width="1"/><path d="M7.6 15L11.6 11M10.6 10.2A1.6 1.6 0 1 0 12.6 12.4" stroke="#222" stroke-width="1.6"/></svg>
<svg style="left:1576.3px;top:122.8px;" width="7.2" height="4.8" viewBox="0 0 7.2 4.8" fill="none" stroke-linecap="round" stroke-linejoin="round"><path d="M1 1L3.6 3.8L6.2 1" stroke="#333" stroke-width="1.45"/></svg>
</div>

<!-- formula bar -->
<div class="a" style="left:10px;top:161px;width:163px;height:28px;background:#fff;border:1px solid #d9d9d9;border-bottom-color:#c4c4c4;border-radius:5px"></div>
<div class="t" style="left:72.41px;top:168.32px;font-size:13.8px;color:#222;transform:scaleX(0.9403);">I16</div>
<svg style="left:156px;top:172px;" width="10" height="7" viewBox="0 0 10 7" fill="none" stroke-linecap="round" stroke-linejoin="round"><path d="M1 1.2L5 5.2L9 1.2" stroke="#666" stroke-width="1"/></svg>
<div class="a" style="left:181px;top:161px;width:1485px;height:28px;background:#fff;border:1px solid #d9d9d9;border-bottom-color:#c4c4c4;border-radius:5px"></div>
<svg style="left:204px;top:166px;" width="18" height="18" viewBox="0 0 18 18" fill="none" stroke-linecap="round" stroke-linejoin="round"><circle cx="8" cy="7.8" r="5.6" stroke="#333" stroke-width="1.2"/><path d="M5.8 6.6H10.2M5.8 9H10.2" stroke="#333" stroke-width="1.2"/><path d="M12.2 12L15.6 15.4" stroke="#333" stroke-width="1.3"/></svg>
<div class="t" style="left:235px;top:167px;font-family:'Liberation Serif',serif;font-style:italic;font-size:16px;color:#333">fx</div>
<div class="a" style="left:263px;top:167px;width:1px;height:16px;background:#cfcfcf;"></div>

<!-- grid -->
<div id="grid">
  <div class="a" style="left:0;top:0;width:1661px;height:23px;background:#eeeeee"></div>
  <div class="a" style="left:0;top:0;width:29px;height:764px;background:#eeeeee"></div>
  <div class="a" style="left:29px;top:23px;width:1632px;height:1px;background:#dcdcdc"></div>
  <div class="ch" style="left:29px;width:249px">A</div>
  <div class="ch" style="left:278px;width:220px">B</div>
  <div class="ch" style="left:498px;width:210px">C</div>
  <div class="ch" style="left:708px;width:303px">D</div>
  <div class="ch" style="left:1011px;width:330px">E</div>
  <div class="ch" style="left:1341px;width:129px">F</div>
  <div class="ch" style="left:1470px;width:92px">G</div>
  <div class="ch" style="left:1562px;width:72px">H</div>
  <div class="a" style="left:278px;top:0;width:1px;height:23px;background:#dcdcdc"></div>
  <div class="a" style="left:498px;top:0;width:1px;height:23px;background:#dcdcdc"></div>
  <div class="a" style="left:708px;top:0;width:1px;height:23px;background:#dcdcdc"></div>
  <div class="a" style="left:1011px;top:0;width:1px;height:23px;background:#dcdcdc"></div>
  <div class="a" style="left:1341px;top:0;width:1px;height:23px;background:#dcdcdc"></div>
  <div class="a" style="left:1470px;top:0;width:1px;height:23px;background:#dcdcdc"></div>
  <div class="a" style="left:1562px;top:0;width:1px;height:23px;background:#dcdcdc"></div>
  <div class="a" style="left:1634px;top:0;width:1px;height:23px;background:#dcdcdc"></div>
  <div class="a" style="left:1661px;top:0;width:1px;height:23px;background:#dcdcdc"></div>
</div>
<div class="a" style="left:0;top:220px;width:1661px;height:740px;overflow:hidden">
<div class="a" style="left:0;top:-220px;width:1661px;height:960px">
<div class="hl" style="top:239px"></div>
<div class="hl" style="top:259px"></div>
<div class="hl" style="top:279px"></div>
<div class="hl" style="top:299px"></div>
<div class="hl" style="top:319px"></div>
<div class="hl" style="top:339px"></div>
<div class="hl" style="top:359px"></div>
<div class="hl" style="top:379px"></div>
<div class="hl" style="top:399px"></div>
<div class="hl" style="top:419px"></div>
<div class="hl" style="top:439px"></div>
<div class="hl" style="top:459px"></div>
<div class="hl" style="top:479px"></div>
<div class="hl" style="top:499px"></div>
<div class="hl" style="top:519px"></div>
<div class="hl" style="top:539px"></div>
<div class="hl" style="top:559px"></div>
<div class="hl" style="top:579px"></div>
<div class="hl" style="top:599px"></div>
<div class="hl" style="top:619px"></div>
<div class="hl" style="top:639px"></div>
<div class="hl" style="top:659px"></div>
<div class="hl" style="top:679px"></div>
<div class="hl" style="top:699px"></div>
<div class="hl" style="top:719px"></div>
<div class="hl" style="top:739px"></div>
<div class="hl" style="top:759px"></div>
<div class="hl" style="top:779px"></div>
<div class="hl" style="top:799px"></div>
<div class="hl" style="top:819px"></div>
<div class="hl" style="top:839px"></div>
<div class="hl" style="top:859px"></div>
<div class="hl" style="top:879px"></div>
<div class="hl" style="top:899px"></div>
<div class="hl" style="top:919px"></div>
<div class="hl" style="top:939px"></div>
<div class="hl" style="top:959px"></div>
<div class="vl" style="left:29px"></div>
<div class="vl" style="left:278px"></div>
<div class="vl" style="left:498px"></div>
<div class="vl" style="left:708px"></div>
<div class="vl" style="left:1011px"></div>
<div class="vl" style="left:1341px"></div>
<div class="vl" style="left:1470px"></div>
<div class="vl" style="left:1562px"></div>
<div class="vl" style="left:1634px"></div>
<div class="vl" style="left:1661px"></div>
<div class="a" style="left:708px;top:220px;width:304px;height:740px;background:#9dc3e6"></div>
<div class="rh" style="top:220px">46</div>
<div class="rh" style="top:240px">47</div>
<div class="rh" style="top:260px">48</div>
<div class="rh" style="top:280px">49</div>
<div class="rh" style="top:300px">50</div>
<div class="rh" style="top:320px">51</div>
<div class="rh" style="top:340px">52</div>
<div class="rh" style="top:360px">53</div>
<div class="rh" style="top:380px">54</div>
<div class="rh" style="top:400px">55</div>
<div class="rh" style="top:420px">56</div>
<div class="rh" style="top:440px">57</div>
<div class="rh" style="top:460px">58</div>
<div class="rh" style="top:480px">59</div>
<div class="rh" style="top:500px">60</div>
<div class="rh" style="top:520px">61</div>
<div class="rh" style="top:540px">62</div>
<div class="rh" style="top:560px">63</div>
<div class="rh" style="top:580px">64</div>
<div class="rh" style="top:600px">65</div>
<div class="rh" style="top:620px">66</div>
<div class="rh" style="top:640px">67</div>
<div class="rh" style="top:660px">68</div>
<div class="rh" style="top:680px">69</div>
<div class="rh" style="top:700px">70</div>
<div class="rh" style="top:720px">71</div>
<div class="rh" style="top:740px">72</div>
<div class="rh" style="top:760px">73</div>
<div class="rh" style="top:780px">74</div>
<div class="rh" style="top:800px">75</div>
<div class="rh" style="top:820px">76</div>
<div class="rh" style="top:840px">77</div>
<div class="rh" style="top:860px">78</div>
<div class="rh" style="top:880px">79</div>
<div class="rh" style="top:900px">80</div>
<div class="rh" style="top:920px">81</div>
<div class="rh" style="top:940px">82</div>
<div class="c" style="left:30px;top:220px;width:248px"><span style="transform:scaleX(0.8906)">LEANNE ASHLEY</span></div>
<div class="c" style="left:279px;top:220px;width:219px"><span style="transform:scaleX(0.9994)">Clear Springs Elementary</span></div>
<div class="c" style="left:499px;top:220px;width:209px"><span style="transform:scaleX(1.0349)">Community Education</span></div>
<div class="c" style="left:709px;top:220px;width:302px"><span style="transform:scaleX(1.0136)">Explorers Program Assistant</span></div>
<div class="c" style="left:1012px;top:220px;width:329px"><span style="transform:scaleX(1.0298)">leanne.ashley@minnetonkaschools.org</span></div>
<div class="c" style="left:1342px;top:220px;width:128px"><span style="transform:scaleX(0.9348)">952-401-6950</span></div>
<div class="c" style="left:1471px;top:220px;width:91px"><span class="r" style="transform:scaleX(0.9319)">2023</span></div>
<div class="c" style="left:30px;top:240px;width:248px"><span style="transform:scaleX(0.9083)">ADRIENNE AGRE</span></div>
<div class="c" style="left:279px;top:240px;width:219px"><span style="transform:scaleX(1.0315)">Minnetonka Middle School East</span></div>
<div class="c" style="left:499px;top:240px;width:209px"><span style="transform:scaleX(1.0339)">Elementary</span></div>
<div class="c" style="left:709px;top:240px;width:302px"><span style="transform:scaleX(1.0045)">Grade 6 Teacher</span></div>
<div class="c" style="left:1012px;top:240px;width:329px"><span style="transform:scaleX(1.0359)">adrienne.agre@minnetonkaschools.org</span></div>
<div class="c" style="left:1342px;top:240px;width:128px"><span style="transform:scaleX(0.9348)">952-401-5200</span></div>
<div class="c" style="left:1471px;top:240px;width:91px"><span class="r" style="transform:scaleX(0.9319)">2004</span></div>
<div class="c" style="left:30px;top:260px;width:248px"><span style="transform:scaleX(0.9236)">ERICA AUSTERMAN</span></div>
<div class="c" style="left:279px;top:260px;width:219px"><span style="transform:scaleX(1.0205)">Deephaven Elementary</span></div>
<div class="c" style="left:499px;top:260px;width:209px"><span style="transform:scaleX(0.9996)">Basic Skills/Reading, Elementary</span></div>
<div class="c" style="left:709px;top:260px;width:302px"><span style="transform:scaleX(1.0067)">Reading Teacher, Grade 3 Teacher</span></div>
<div class="c" style="left:1012px;top:260px;width:329px"><span style="transform:scaleX(1.0368)">erica.austerman@minnetonkaschools.org</span></div>
<div class="c" style="left:1342px;top:260px;width:128px"><span style="transform:scaleX(0.9348)">952-401-6900</span></div>
<div class="c" style="left:1471px;top:260px;width:91px"><span class="r" style="transform:scaleX(0.9319)">2012</span></div>
<div class="c" style="left:30px;top:280px;width:248px"><span style="transform:scaleX(0.9098)">NICHOLAS BAHR</span></div>
<div class="c" style="left:279px;top:280px;width:219px"><span style="transform:scaleX(1.0296)">Minnetonka High School</span></div>
<div class="c" style="left:499px;top:280px;width:209px"><span style="transform:scaleX(1.0029)">Co-Curricular, Tech Ed</span></div>
<div class="c" style="left:709px;top:280px;width:302px"><span style="transform:scaleX(1.0196)">Computer Science, Coders Unite Advisor, Technology</span></div>
<div class="c" style="left:1012px;top:280px;width:329px"><span style="transform:scaleX(1.0383)">nick.bahr@minnetonkaschools.org</span></div>
<div class="c" style="left:1342px;top:280px;width:128px"><span style="transform:scaleX(0.9348)">952-401-5700</span></div>
<div class="c" style="left:1471px;top:280px;width:91px"><span class="r" style="transform:scaleX(0.9319)">2009</span></div>
<div class="c" style="left:30px;top:300px;width:248px"><span style="transform:scaleX(0.9202)">MITCHELL ANDERSON</span></div>
<div class="c" style="left:279px;top:300px;width:219px"><span style="transform:scaleX(1.0267)">Groveland Elementary</span></div>
<div class="c" style="left:499px;top:300px;width:209px"><span style="transform:scaleX(1.0010)">Physical Education</span></div>
<div class="c" style="left:709px;top:300px;width:302px"><span style="transform:scaleX(1.0084)">Physical Education Teacher</span></div>
<div class="c" style="left:1012px;top:300px;width:329px"><span style="transform:scaleX(1.0436)">mitchell.anderson@minnetonkaschools.org</span></div>
<div class="c" style="left:1342px;top:300px;width:128px"><span style="transform:scaleX(0.9348)">952-401-5600</span></div>
<div class="c" style="left:1471px;top:300px;width:91px"><span class="r" style="transform:scaleX(0.9319)">2017</span></div>
<div class="c" style="left:30px;top:320px;width:248px"><span style="transform:scaleX(0.9136)">KARLA FERNANDA ARREOLA-LUCIO</span></div>
<div class="c" style="left:279px;top:320px;width:219px"><span style="transform:scaleX(1.0296)">Minnetonka High School</span></div>
<div class="c" style="left:499px;top:320px;width:209px"><span style="transform:scaleX(1.0072)">Co-Curricular</span></div>
<div class="c" style="left:709px;top:320px;width:302px"><span style="transform:scaleX(1.0130)">Debate Asst</span></div>
<div class="c" style="left:1012px;top:320px;width:329px"><span style="transform:scaleX(1.0425)">karlafernanda.arreolalucio@minnetonkaschools.org</span></div>
<div class="c" style="left:1342px;top:320px;width:128px"><span style="transform:scaleX(0.9348)">952-401-5700</span></div>
<div class="c" style="left:1471px;top:320px;width:91px"><span class="r" style="transform:scaleX(0.9319)">2024</span></div>
<div class="c" style="left:30px;top:340px;width:248px"><span style="transform:scaleX(0.8593)">KYLE BAKER</span></div>
<div class="c" style="left:279px;top:340px;width:219px"><span style="transform:scaleX(1.0039)">Scenic Heights Elementary</span></div>
<div class="c" style="left:499px;top:340px;width:209px"><span style="transform:scaleX(1.0349)">Community Education</span></div>
<div class="c" style="left:709px;top:340px;width:302px"><span style="transform:scaleX(1.0136)">Explorers Program Assistant</span></div>
<div class="c" style="left:1012px;top:340px;width:329px"><span style="transform:scaleX(1.0360)">kyle.baker@minnetonkaschools.org</span></div>
<div class="c" style="left:1342px;top:340px;width:128px"><span style="transform:scaleX(0.9348)">952-401-5400</span></div>
<div class="c" style="left:1471px;top:340px;width:91px"><span class="r" style="transform:scaleX(0.9319)">2024</span></div>
<div class="c" style="left:30px;top:360px;width:248px"><span style="transform:scaleX(0.9326)">NATALIE AZBILL</span></div>
<div class="c" style="left:279px;top:360px;width:219px"><span style="transform:scaleX(1.0465)">Minnetonka Community Education</span></div>
<div class="c" style="left:499px;top:360px;width:209px"><span style="transform:scaleX(1.0349)">Community Education</span></div>
<div class="c" style="left:709px;top:360px;width:302px"><span style="transform:scaleX(1.0863)">Tutor</span></div>
<div class="c" style="left:1012px;top:360px;width:329px"><span style="transform:scaleX(1.0395)">natalie.azbill@minnetonkaschools.org</span></div>
<div class="c" style="left:1342px;top:360px;width:128px"><span style="transform:scaleX(0.9348)">952-401-6800</span></div>
<div class="c" style="left:1471px;top:360px;width:91px"><span class="r" style="transform:scaleX(0.9319)">2024</span></div>
<div class="c" style="left:30px;top:380px;width:248px"><span style="transform:scaleX(0.9107)">LORI ANDERSON</span></div>
<div class="c" style="left:279px;top:380px;width:219px"><span style="transform:scaleX(1.0039)">Scenic Heights Elementary</span></div>
<div class="c" style="left:499px;top:380px;width:209px"><span style="transform:scaleX(1.0339)">Elementary</span></div>
<div class="c" style="left:709px;top:380px;width:302px"><span style="transform:scaleX(1.0045)">Grade 1 Teacher</span></div>
<div class="c" style="left:1012px;top:380px;width:329px"><span style="transform:scaleX(1.0418)">lori.anderson@minnetonkaschools.org</span></div>
<div class="c" style="left:1342px;top:380px;width:128px"><span style="transform:scaleX(0.9348)">952-401-5400</span></div>
<div class="c" style="left:1471px;top:380px;width:91px"><span class="r" style="transform:scaleX(0.9319)">2000</span></div>
<div class="c" style="left:30px;top:400px;width:248px"><span style="transform:scaleX(0.9347)">GABRIELA ALVARADO</span></div>
<div class="c" style="left:279px;top:400px;width:219px"><span style="transform:scaleX(1.0205)">Deephaven Elementary</span></div>
<div class="c" style="left:499px;top:400px;width:209px"><span style="transform:scaleX(1.0136)">Deephaven</span></div>
<div class="c" style="left:709px;top:400px;width:302px"><span style="transform:scaleX(0.9948)">Special Education Para, Classroom Para-Spanish Kindergarten</span></div>
<div class="c" style="left:1012px;top:400px;width:329px"><span style="transform:scaleX(1.0344)">gabriela.alvarado@minnetonkaschools.org</span></div>
<div class="c" style="left:1342px;top:400px;width:128px"><span style="transform:scaleX(0.9348)">952-401-6900</span></div>
<div class="c" style="left:1471px;top:400px;width:91px"><span class="r" style="transform:scaleX(0.9319)">2010</span></div>
<div class="c" style="left:30px;top:420px;width:248px"><span style="transform:scaleX(0.9269)">KRISTINE ARITT-MONTGOMERY</span></div>
<div class="c" style="left:279px;top:420px;width:219px"><span style="transform:scaleX(1.0296)">Minnetonka High School</span></div>
<div class="c" style="left:499px;top:420px;width:209px"><span style="transform:scaleX(0.9914)">High School</span></div>
<div class="c" style="left:709px;top:420px;width:302px"><span style="transform:scaleX(0.9909)">Special Education Para</span></div>
<div class="c" style="left:1012px;top:420px;width:329px"><span style="transform:scaleX(1.0578)">kristine.aritt-montgomery@minnetonkaschools.org</span></div>
<div class="c" style="left:1342px;top:420px;width:128px"><span style="transform:scaleX(0.9348)">952-401-5700</span></div>
<div class="c" style="left:1471px;top:420px;width:91px"><span class="r" style="transform:scaleX(0.9319)">2018</span></div>
<div class="c" style="left:30px;top:440px;width:248px"><span style="transform:scaleX(0.9274)">KIMBERLY AANESTAD</span></div>
<div class="c" style="left:279px;top:440px;width:219px"><span style="transform:scaleX(1.0039)">Scenic Heights Elementary</span></div>
<div class="c" style="left:499px;top:440px;width:209px"><span style="transform:scaleX(1.0127)">Community Education, Scenic Heights</span></div>
<div class="c" style="left:709px;top:440px;width:302px"><span style="transform:scaleX(1.0027)">Explorers Behavior Assistant, Special Education Para</span></div>
<div class="c" style="left:1012px;top:440px;width:329px"><span style="transform:scaleX(1.0419)">kimberly.aanestad@minnetonkaschools.org</span></div>
<div class="c" style="left:1342px;top:440px;width:128px"><span style="transform:scaleX(0.9348)">952-401-5400</span></div>
<div class="c" style="left:1471px;top:440px;width:91px"><span class="r" style="transform:scaleX(0.9319)">2020</span></div>
<div class="c" style="left:30px;top:460px;width:248px"><span style="transform:scaleX(0.9054)">LAURA BAKER</span></div>
<div class="c" style="left:279px;top:460px;width:219px"><span style="transform:scaleX(1.0296)">Minnetonka High School</span></div>
<div class="c" style="left:499px;top:460px;width:209px"><span style="transform:scaleX(1.0236)">Arts Center</span></div>
<div class="c" style="left:709px;top:460px;width:302px"><span style="transform:scaleX(1.0601)">Artscenter Actor</span></div>
<div class="c" style="left:1012px;top:460px;width:329px"><span style="transform:scaleX(1.0372)">laura.baker@minnetonkaschools.org</span></div>
<div class="c" style="left:1342px;top:460px;width:128px"><span style="transform:scaleX(0.9348)">952-401-5700</span></div>
<div class="c" style="left:1471px;top:460px;width:91px"><span class="r" style="transform:scaleX(0.9319)">2024</span></div>
<div class="c" style="left:30px;top:480px;width:248px"><span style="transform:scaleX(0.9566)">ZOYA AGHAMIRZAI</span></div>
<div class="c" style="left:279px;top:480px;width:219px"><span style="transform:scaleX(1.0441)">Minnewashta Elementary</span></div>
<div class="c" style="left:499px;top:480px;width:209px"><span style="transform:scaleX(1.0349)">Community Education</span></div>
<div class="c" style="left:709px;top:480px;width:302px"><span style="transform:scaleX(1.0193)">Explorers Student Assistant</span></div>
<div class="c" style="left:1012px;top:480px;width:329px"><span style="transform:scaleX(1.0264)">zoya.aghamirzai@minnetonkaschools.org</span></div>
<div class="c" style="left:1342px;top:480px;width:128px"><span style="transform:scaleX(0.9348)">952-401-5500</span></div>
<div class="c" style="left:1471px;top:480px;width:91px"><span class="r" style="transform:scaleX(0.9319)">2023</span></div>
<div class="c" style="left:30px;top:500px;width:248px"><span style="transform:scaleX(0.9333)">PATRICIA ARNTZ</span></div>
<div class="c" style="left:279px;top:500px;width:219px"><span style="transform:scaleX(1.0342)">Deephaven Elementary, Minnewashta Elementary</span></div>
<div class="c" style="left:499px;top:500px;width:209px"><span style="transform:scaleX(1.0166)">Co-Curricular, Deephaven, Elementary</span></div>
<div class="c" style="left:709px;top:500px;width:302px"><span style="transform:scaleX(1.0114)">Piano Accompanist, Elem Choirs-Piano Accompanist</span></div>
<div class="c" style="left:1012px;top:500px;width:329px"><span style="transform:scaleX(1.0438)">patricia.arntz@minnetonkaschools.org</span></div>
<div class="c" style="left:1342px;top:500px;width:128px"><span style="transform:scaleX(0.9348)">952-401-6900</span></div>
<div class="c" style="left:1471px;top:500px;width:91px"><span class="r" style="transform:scaleX(0.9319)">2022</span></div>
<div class="c" style="left:30px;top:520px;width:248px"><span style="transform:scaleX(0.8966)">KAYLENE ALEXANDER</span></div>
<div class="c" style="left:279px;top:520px;width:219px"><span style="transform:scaleX(1.0454)">Minnetonka Middle School West</span></div>
<div class="c" style="left:499px;top:520px;width:209px"><span style="transform:scaleX(1.0102)">Elementary, Science</span></div>
<div class="c" style="left:709px;top:520px;width:302px"><span style="transform:scaleX(1.0020)">Grade 6 Teacher, Science Teacher</span></div>
<div class="c" style="left:1012px;top:520px;width:329px"><span style="transform:scaleX(1.0322)">kaylene.alexander@minnetonkaschools.org</span></div>
<div class="c" style="left:1342px;top:520px;width:128px"><span style="transform:scaleX(0.9348)">952-401-5300</span></div>
<div class="c" style="left:1471px;top:520px;width:91px"><span class="r" style="transform:scaleX(0.9319)">2017</span></div>
<div class="c" style="left:30px;top:540px;width:248px"><span style="transform:scaleX(0.9197)">OLIVIA ANDERSON-BLYTHE</span></div>
<div class="c" style="left:279px;top:540px;width:219px"><span style="transform:scaleX(1.0267)">Groveland Elementary</span></div>
<div class="c" style="left:499px;top:540px;width:209px"><span style="transform:scaleX(1.0291)">Community Education, Groveland</span></div>
<div class="c" style="left:709px;top:540px;width:302px"><span style="transform:scaleX(1.0027)">Special Education Para, Explorers Behavior Assistant</span></div>
<div class="c" style="left:1012px;top:540px;width:329px"><span style="transform:scaleX(1.0422)">olivia.anderson-blythe@minnetonkaschools.org</span></div>
<div class="c" style="left:1342px;top:540px;width:128px"><span style="transform:scaleX(0.9348)">952-401-5600</span></div>
<div class="c" style="left:1471px;top:540px;width:91px"><span class="r" style="transform:scaleX(0.9319)">2021</span></div>
<div class="c" style="left:30px;top:560px;width:248px"><span style="transform:scaleX(0.9130)">CHRISTA ANDERSON</span></div>
<div class="c" style="left:279px;top:560px;width:219px"><span style="transform:scaleX(1.0454)">Minnetonka Middle School West</span></div>
<div class="c" style="left:499px;top:560px;width:209px"><span style="transform:scaleX(1.0072)">Co-Curricular</span></div>
<div class="c" style="left:709px;top:560px;width:302px"><span style="transform:scaleX(1.0164)">Drama-Fall Musical Choreographer</span></div>
<div class="c" style="left:1012px;top:560px;width:329px"><span style="transform:scaleX(1.0361)">christa.anderson@minnetonkaschools.org</span></div>
<div class="c" style="left:1342px;top:560px;width:128px"><span style="transform:scaleX(0.9348)">952-401-5300</span></div>
<div class="c" style="left:1471px;top:560px;width:91px"><span class="r" style="transform:scaleX(0.9319)">2015</span></div>
<div class="c" style="left:30px;top:580px;width:248px"><span style="transform:scaleX(0.9070)">JOSHUA ARROYO</span></div>
<div class="c" style="left:279px;top:580px;width:219px"><span style="transform:scaleX(1.0296)">Minnetonka High School</span></div>
<div class="c" style="left:499px;top:580px;width:209px"><span style="transform:scaleX(1.0176)">Buildings And Grounds</span></div>
<div class="c" style="left:709px;top:580px;width:302px"><span style="transform:scaleX(1.0158)">Custodian</span></div>
<div class="c" style="left:1012px;top:580px;width:329px"><span style="transform:scaleX(1.0392)">joshua.arroyo@minnetonkaschools.org</span></div>
<div class="c" style="left:1342px;top:580px;width:128px"><span style="transform:scaleX(0.9348)">952-401-5700</span></div>
<div class="c" style="left:1471px;top:580px;width:91px"><span class="r" style="transform:scaleX(0.9319)">2020</span></div>
<div class="c" style="left:30px;top:600px;width:248px"><span style="transform:scaleX(0.9255)">MOLLIE ANDERSON</span></div>
<div class="c" style="left:279px;top:600px;width:219px"><span style="transform:scaleX(1.0508)">Minnetonka Middle School West, Minnetonka</span></div>
<div class="c" style="left:499px;top:600px;width:209px"><span style="transform:scaleX(1.0253)">Co-Curricular, Community Education</span></div>
<div class="c" style="left:709px;top:600px;width:302px"><span style="transform:scaleX(1.0267)">Language Arts Teacher, Yearbook Asst Advisor, Tutor</span></div>
<div class="c" style="left:1012px;top:600px;width:329px"><span style="transform:scaleX(1.0415)">mollie.anderson@minnetonkaschools.org</span></div>
<div class="c" style="left:1342px;top:600px;width:128px"><span style="transform:scaleX(0.9348)">952-401-5300</span></div>
<div class="c" style="left:1471px;top:600px;width:91px"><span class="r" style="transform:scaleX(0.9319)">2022</span></div>
<div class="c" style="left:30px;top:620px;width:248px"><span style="transform:scaleX(0.8928)">CINDY ANDRESS</span></div>
<div class="c" style="left:279px;top:620px;width:219px"><span style="transform:scaleX(1.0441)">Minnewashta Elementary</span></div>
<div class="c" style="left:499px;top:620px;width:209px"><span style="transform:scaleX(1.0594)">Minnewashta</span></div>
<div class="c" style="left:709px;top:620px;width:302px"><span style="transform:scaleX(1.0107)">Head Principal</span></div>
<div class="c" style="left:1012px;top:620px;width:329px"><span style="transform:scaleX(1.0333)">cindy.andress@minnetonkaschools.org</span></div>
<div class="c" style="left:1342px;top:620px;width:128px"><span style="transform:scaleX(0.9348)">952-401-5500</span></div>
<div class="c" style="left:1471px;top:620px;width:91px"><span class="r" style="transform:scaleX(0.9319)">2004</span></div>
<div class="c" style="left:30px;top:640px;width:248px"><span style="transform:scaleX(0.9716)">EMILY AN</span></div>
<div class="c" style="left:279px;top:640px;width:219px"><span style="transform:scaleX(1.0226)">Minnetonka Public Schools</span></div>
<div class="c" style="left:499px;top:640px;width:209px"><span style="transform:scaleX(1.0210)">Aquatics</span></div>
<div class="c" style="left:709px;top:640px;width:302px"><span style="transform:scaleX(1.0507)">Diving Instructor</span></div>
<div class="c" style="left:1012px;top:640px;width:329px"><span style="transform:scaleX(1.0441)">emily.an@minnetonkaschools.org</span></div>
<div class="c" style="left:1342px;top:640px;width:128px"><span style="transform:scaleX(0.9348)">952-401-5000</span></div>
<div class="c" style="left:1471px;top:640px;width:91px"><span class="r" style="transform:scaleX(0.9319)">2023</span></div>
<div class="c" style="left:30px;top:660px;width:248px"><span style="transform:scaleX(0.9523)">MAKENZIE BACHMANN</span></div>
<div class="c" style="left:279px;top:660px;width:219px"><span style="transform:scaleX(1.0296)">Minnetonka High School</span></div>
<div class="c" style="left:499px;top:660px;width:209px"><span style="transform:scaleX(1.0002)">Language Arts</span></div>
<div class="c" style="left:709px;top:660px;width:302px"><span style="transform:scaleX(1.0093)">Language Arts Teacher</span></div>
<div class="c" style="left:1012px;top:660px;width:329px"><span style="transform:scaleX(1.0316)">makenzie.bachmann@minnetonkaschools.org</span></div>
<div class="c" style="left:1342px;top:660px;width:128px"><span style="transform:scaleX(0.9348)">952-401-5700</span></div>
<div class="c" style="left:1471px;top:660px;width:91px"><span class="r" style="transform:scaleX(0.9319)">2022</span></div>
<div class="c" style="left:30px;top:680px;width:248px"><span style="transform:scaleX(0.9294)">MICHAEL ANDERSON</span></div>
<div class="c" style="left:279px;top:680px;width:219px"><span style="transform:scaleX(1.0409)">Minnetonka Middle School East, Minnetonka</span></div>
<div class="c" style="left:499px;top:680px;width:209px"><span style="transform:scaleX(1.0322)">Community Education, Music</span></div>
<div class="c" style="left:709px;top:680px;width:302px"><span style="transform:scaleX(1.0394)">Music Teacher, Music Academy Instructor</span></div>
<div class="c" style="left:1012px;top:680px;width:329px"><span style="transform:scaleX(1.0355)">michael.anderson@minnetonkaschools.org</span></div>
<div class="c" style="left:1342px;top:680px;width:128px"><span style="transform:scaleX(0.9348)">952-401-5200</span></div>
<div class="c" style="left:1471px;top:680px;width:91px"><span class="r" style="transform:scaleX(0.9319)">2010</span></div>
<div class="c" style="left:30px;top:700px;width:248px"><span style="transform:scaleX(0.9789)">AMANDA AIKEN</span></div>
<div class="c" style="left:279px;top:700px;width:219px"><span style="transform:scaleX(1.0296)">Minnetonka High School</span></div>
<div class="c" style="left:499px;top:700px;width:209px"><span style="transform:scaleX(0.9807)">Social Studies</span></div>
<div class="c" style="left:709px;top:700px;width:302px"><span style="transform:scaleX(0.9973)">Social Studies Teacher</span></div>
<div class="c" style="left:1012px;top:700px;width:329px"><span style="transform:scaleX(1.0325)">amanda.aiken@minnetonkaschools.org</span></div>
<div class="c" style="left:1342px;top:700px;width:128px"><span style="transform:scaleX(0.9348)">952-401-5700</span></div>
<div class="c" style="left:1471px;top:700px;width:91px"><span class="r" style="transform:scaleX(0.9319)">2003</span></div>
<div class="c" style="left:30px;top:720px;width:248px"><span style="transform:scaleX(0.9276)">HAILEY AURAN</span></div>
<div class="c" style="left:279px;top:720px;width:219px"><span style="transform:scaleX(1.0255)">Clear Springs Elementary, Minnetonka</span></div>
<div class="c" style="left:499px;top:720px;width:209px"><span style="transform:scaleX(1.0272)">Aquatics, Community Education, Elementary</span></div>
<div class="c" style="left:709px;top:720px;width:302px"><span style="transform:scaleX(1.0276)">Grade 5 Teacher, More Than Pink Instructor</span></div>
<div class="c" style="left:1012px;top:720px;width:329px"><span style="transform:scaleX(1.0414)">hailey.auran@minnetonkaschools.org</span></div>
<div class="c" style="left:1342px;top:720px;width:128px"><span style="transform:scaleX(0.9348)">952-401-6950</span></div>
<div class="c" style="left:1471px;top:720px;width:91px"><span class="r" style="transform:scaleX(0.9319)">2021</span></div>
<div class="c" style="left:30px;top:740px;width:248px"><span style="transform:scaleX(0.8690)">JESSICA ALLEN</span></div>
<div class="c" style="left:279px;top:740px;width:219px"><span style="transform:scaleX(1.0441)">Minnewashta Elementary</span></div>
<div class="c" style="left:499px;top:740px;width:209px"><span style="transform:scaleX(1.0339)">Elementary</span></div>
<div class="c" style="left:709px;top:740px;width:302px"><span style="transform:scaleX(1.0344)">Kindergarten Teacher</span></div>
<div class="c" style="left:1012px;top:740px;width:329px"><span style="transform:scaleX(1.0261)">jessica.allen@minnetonkaschools.org</span></div>
<div class="c" style="left:1342px;top:740px;width:128px"><span style="transform:scaleX(0.9348)">952-401-5500</span></div>
<div class="c" style="left:1471px;top:740px;width:91px"><span class="r" style="transform:scaleX(0.9319)">2004</span></div>
<div class="c" style="left:30px;top:760px;width:248px"><span style="transform:scaleX(0.8888)">CAROL APPEL</span></div>
<div class="c" style="left:279px;top:760px;width:219px"><span style="transform:scaleX(1.0465)">Minnetonka Community Education</span></div>
<div class="c" style="left:499px;top:760px;width:209px"><span style="transform:scaleX(1.0349)">Community Education</span></div>
<div class="c" style="left:709px;top:760px;width:302px"><span style="transform:scaleX(1.0572)">Piano Instructor, Tutor</span></div>
<div class="c" style="left:1012px;top:760px;width:329px"><span style="transform:scaleX(1.0372)">carol.appel@minnetonkaschools.org</span></div>
<div class="c" style="left:1342px;top:760px;width:128px"><span style="transform:scaleX(0.9348)">952-401-6800</span></div>
<div class="c" style="left:1471px;top:760px;width:91px"><span class="r" style="transform:scaleX(0.9319)">2008</span></div>
<div class="c" style="left:30px;top:780px;width:248px"><span style="transform:scaleX(0.9311)">MARY ANDERSON</span></div>
<div class="c" style="left:279px;top:780px;width:219px"><span style="transform:scaleX(1.0315)">Minnetonka Middle School East</span></div>
<div class="c" style="left:499px;top:780px;width:209px"><span style="transform:scaleX(1.0353)">Nutrition Services</span></div>
<div class="c" style="left:709px;top:780px;width:302px"><span style="transform:scaleX(0.9815)">Cook</span></div>
<div class="c" style="left:1012px;top:780px;width:329px"><span style="transform:scaleX(1.0430)">mary.j.anderson@minnetonkaschools.org</span></div>
<div class="c" style="left:1342px;top:780px;width:128px"><span style="transform:scaleX(0.9348)">952-401-5200</span></div>
<div class="c" style="left:1471px;top:780px;width:91px"><span class="r" style="transform:scaleX(0.9319)">2014</span></div>
<div class="c" style="left:30px;top:800px;width:248px"><span style="transform:scaleX(0.9162)">BONNIE ALEXANDER</span></div>
<div class="c" style="left:279px;top:800px;width:219px"><span style="transform:scaleX(0.9994)">Clear Springs Elementary</span></div>
<div class="c" style="left:499px;top:800px;width:209px"><span style="transform:scaleX(0.9750)">Clear Springs</span></div>
<div class="c" style="left:709px;top:800px;width:302px"><span style="transform:scaleX(0.9909)">Special Education Para</span></div>
<div class="c" style="left:1012px;top:800px;width:329px"><span style="transform:scaleX(1.0383)">bonnie.alexander@minnetonkaschools.org</span></div>
<div class="c" style="left:1342px;top:800px;width:128px"><span style="transform:scaleX(0.9348)">952-401-6950</span></div>
<div class="c" style="left:1471px;top:800px;width:91px"><span class="r" style="transform:scaleX(0.9319)">2023</span></div>
<div class="c" style="left:30px;top:820px;width:248px"><span style="transform:scaleX(0.8932)">HEATHER BAKER</span></div>
<div class="c" style="left:279px;top:820px;width:219px"><span style="transform:scaleX(1.0103)">Excelsior Elementary</span></div>
<div class="c" style="left:499px;top:820px;width:209px"><span style="transform:scaleX(1.0325)">Community Education, High Potential</span></div>
<div class="c" style="left:709px;top:820px;width:302px"><span style="transform:scaleX(1.0108)">Explorers Program Leader, Advanced Learning Program</span></div>
<div class="c" style="left:1012px;top:820px;width:329px"><span style="transform:scaleX(1.0450)">heather.baker@minnetonkaschools.org</span></div>
<div class="c" style="left:1342px;top:820px;width:128px"><span style="transform:scaleX(0.9348)">952-401-5650</span></div>
<div class="c" style="left:1471px;top:820px;width:91px"><span class="r" style="transform:scaleX(0.9645)">2011</span></div>
<div class="c" style="left:30px;top:840px;width:248px"><span style="transform:scaleX(0.9191)">LORENA BACON</span></div>
<div class="c" style="left:279px;top:840px;width:219px"><span style="transform:scaleX(1.0255)">Clear Springs Elementary, Minnetonka</span></div>
<div class="c" style="left:499px;top:840px;width:209px"><span style="transform:scaleX(1.0099)">Clear Springs, Community Education</span></div>
<div class="c" style="left:709px;top:840px;width:302px"><span style="transform:scaleX(0.9899)">Bus And Traffic Para, Classroom Para, Classroom Para</span></div>
<div class="c" style="left:1012px;top:840px;width:329px"><span style="transform:scaleX(1.0373)">lorena.bacon@minnetonkaschools.org</span></div>
<div class="c" style="left:1342px;top:840px;width:128px"><span style="transform:scaleX(0.9348)">952-401-6950</span></div>
<div class="c" style="left:1471px;top:840px;width:91px"><span class="r" style="transform:scaleX(0.9319)">2003</span></div>
<div class="c" style="left:30px;top:860px;width:248px"><span style="transform:scaleX(0.9651)">MOLLY BAHNEMAN</span></div>
<div class="c" style="left:279px;top:860px;width:219px"><span style="transform:scaleX(1.0465)">Minnetonka Community Education</span></div>
<div class="c" style="left:499px;top:860px;width:209px"><span style="transform:scaleX(1.0349)">Community Education</span></div>
<div class="c" style="left:709px;top:860px;width:302px"><span style="transform:scaleX(0.9995)">Mtka Preschool- Ecfe- Jr Explorers Coord</span></div>
<div class="c" style="left:1012px;top:860px;width:329px"><span style="transform:scaleX(1.0459)">molly.bahneman@minnetonkaschools.org</span></div>
<div class="c" style="left:1342px;top:860px;width:128px"><span style="transform:scaleX(0.9348)">952-401-6800</span></div>
<div class="c" style="left:1471px;top:860px;width:91px"><span class="r" style="transform:scaleX(0.9319)">2016</span></div>
<div class="c" style="left:30px;top:880px;width:248px"><span style="transform:scaleX(0.9053)">LISA ARGIR</span></div>
<div class="c" style="left:279px;top:880px;width:219px"><span style="transform:scaleX(1.0441)">Minnewashta Elementary</span></div>
<div class="c" style="left:499px;top:880px;width:209px"><span style="transform:scaleX(1.0594)">Minnewashta</span></div>
<div class="c" style="left:709px;top:880px;width:302px"><span style="transform:scaleX(0.9860)">Classroom Para-English Ktgn, Special Education Para</span></div>
<div class="c" style="left:1012px;top:880px;width:329px"><span style="transform:scaleX(1.0346)">lisa.argir@minnetonkaschools.org</span></div>
<div class="c" style="left:1342px;top:880px;width:128px"><span style="transform:scaleX(0.9348)">952-401-5500</span></div>
<div class="c" style="left:1471px;top:880px;width:91px"><span class="r" style="transform:scaleX(0.9319)">2001</span></div>
<div class="c" style="left:30px;top:900px;width:248px"><span style="transform:scaleX(0.9416)">AMY ALTENBURG</span></div>
<div class="c" style="left:279px;top:900px;width:219px"><span style="transform:scaleX(1.0039)">Scenic Heights Elementary</span></div>
<div class="c" style="left:499px;top:900px;width:209px"><span style="transform:scaleX(1.0339)">Elementary</span></div>
<div class="c" style="left:709px;top:900px;width:302px"><span style="transform:scaleX(1.0344)">Kindergarten Teacher</span></div>
<div class="c" style="left:1012px;top:900px;width:329px"><span style="transform:scaleX(1.0461)">amy.altenburg@minnetonkaschools.org</span></div>
<div class="c" style="left:1342px;top:900px;width:128px"><span style="transform:scaleX(0.9348)">952-401-5400</span></div>
<div class="c" style="left:1471px;top:900px;width:91px"><span class="r" style="transform:scaleX(0.9319)">1993</span></div>
<div class="c" style="left:30px;top:920px;width:248px"><span style="transform:scaleX(0.9844)">MOHAMED ALI</span></div>
<div class="c" style="left:279px;top:920px;width:219px"><span style="transform:scaleX(1.0157)">District Service Center</span></div>
<div class="c" style="left:499px;top:920px;width:209px"><span style="transform:scaleX(1.0635)">Transportation</span></div>
<div class="c" style="left:709px;top:920px;width:302px"><span style="transform:scaleX(1.0337)">Transportation Specialist</span></div>
<div class="c" style="left:1012px;top:920px;width:329px"><span style="transform:scaleX(1.0410)">mohamed.ali@minnetonkaschools.org</span></div>
<div class="c" style="left:1342px;top:920px;width:128px"><span style="transform:scaleX(0.9348)">952-401-5000</span></div>
<div class="c" style="left:1471px;top:920px;width:91px"><span class="r" style="transform:scaleX(0.9319)">2024</span></div>
<div class="c" style="left:30px;top:940px;width:248px"><span style="transform:scaleX(0.9389)">AHMED ABSHIR</span></div>
<div class="c" style="left:279px;top:940px;width:219px"><span style="transform:scaleX(1.0039)">Scenic Heights Elementary</span></div>
<div class="c" style="left:499px;top:940px;width:209px"><span style="transform:scaleX(0.9853)">Scenic Heights</span></div>
<div class="c" style="left:709px;top:940px;width:302px"><span style="transform:scaleX(0.9967)">Special Education Para, Bus And Traffic Para</span></div>
<div class="c" style="left:1012px;top:940px;width:329px"><span style="transform:scaleX(1.0362)">ahmed.abshir@minnetonkaschools.org</span></div>
<div class="c" style="left:1342px;top:940px;width:128px"><span style="transform:scaleX(0.9348)">952-401-5400</span></div>
<div class="c" style="left:1471px;top:940px;width:91px"><span class="r" style="transform:scaleX(0.9319)">2024</span></div>
</div>
</div>

<svg style="left:9px;top:203px;" width="12" height="12" viewBox="0 0 12 12" fill="none" stroke-linecap="round" stroke-linejoin="round"><path d="M9.5 2.5V9.5H2.5Z" fill="#6a6a6a" stroke="#6a6a6a" stroke-width="1"/></svg>
<div class="a" style="left:1634px;top:196px;width:27px;height:22px;background:#dadada;"></div>
<div class="a" style="left:1634px;top:218px;width:27px;height:2px;background:#0f9d58;"></div><div class="a" style="left:1661px;top:220px;width:17px;height:740px;background:#eeeeee;"></div>
<div class="a" style="left:1661px;top:219px;width:17px;height:1px;background:#dcdcdc;"></div>
<div class="a" style="left:1666px;top:226px;width:8px;height:1.6px;background:#b0b0b0;"></div>
<svg style="left:1664px;top:234px;" width="12" height="8" viewBox="0 0 12 8" fill="none" stroke-linecap="round" stroke-linejoin="round"><path d="M6 1.5L9.5 6H2.5Z" fill="#707070"/></svg>
<div class="a" style="left:1666px;top:545px;width:8px;height:242px;background:#cfcfcf;border-radius:4px"></div>
<svg style="left:1664px;top:945px;" width="12" height="8" viewBox="0 0 12 8" fill="none" stroke-linecap="round" stroke-linejoin="round"><path d="M2.5 2H9.5L6 6.5Z" fill="#707070"/></svg><div class="a" style="left:0px;top:960px;width:1678px;height:26px;background:#eeeeee;"></div>
<div class="a" style="left:0px;top:959px;width:1678px;height:1px;background:#dcdcdc;"></div>
<svg style="left:11px;top:966px;" width="14" height="14" viewBox="0 0 14 14" fill="none" stroke-linecap="round" stroke-linejoin="round"><path d="M3 2.6V11.4M10.2 3.2L6 7L10.2 10.8" stroke="#8a8a8a" stroke-width="1.6"/></svg>
<svg style="left:33px;top:966px;" width="12" height="14" viewBox="0 0 12 14" fill="none" stroke-linecap="round" stroke-linejoin="round"><path d="M7.8 3.2L3.8 7L7.8 10.8" stroke="#8a8a8a" stroke-width="1.6"/></svg>
<svg style="left:55px;top:966px;" width="12" height="14" viewBox="0 0 12 14" fill="none" stroke-linecap="round" stroke-linejoin="round"><path d="M4.2 3.2L8.2 7L4.2 10.8" stroke="#8a8a8a" stroke-width="1.6"/></svg>
<svg style="left:76px;top:966px;" width="14" height="14" viewBox="0 0 14 14" fill="none" stroke-linecap="round" stroke-linejoin="round"><path d="M10.8 2.6V11.4M3.6 3.2L7.8 7L3.6 10.8" stroke="#8a8a8a" stroke-width="1.6"/></svg>
<div class="a" style="left:99px;top:960px;width:132px;height:25px;background:#fff;border:1px solid #e2e2e2;border-top:none;border-radius:0 0 5px 5px"></div>
<div class="t" style="left:112.33px;top:965.57px;font-size:13.5px;color:#0a7d50;font-weight:bold;transform:scaleX(0.8457);">minnetonkaschools</div>
<svg style="left:235px;top:966px;" width="14" height="14" viewBox="0 0 14 14" fill="none" stroke-linecap="round" stroke-linejoin="round"><path d="M7 2V12M2 7H12" stroke="#222" stroke-width="2" stroke-linecap="butt"/></svg>
<div class="a" style="left:991px;top:968px;width:1.3px;height:10px;background:#ababab;"></div>
<svg style="left:1003px;top:968px;" width="8" height="10" viewBox="0 0 8 10" fill="none" stroke-linecap="round" stroke-linejoin="round"><path d="M6 1.8V8.2L1.8 5Z" fill="#707070"/></svg>
<div class="a" style="left:1019px;top:969px;width:569px;height:8px;background:#d0d0d0;border-radius:4px"></div>
<svg style="left:1638px;top:968px;" width="8" height="10" viewBox="0 0 8 10" fill="none" stroke-linecap="round" stroke-linejoin="round"><path d="M2 1.8V8.2L6.2 5Z" fill="#707070"/></svg>
<div class="a" style="left:1658px;top:968px;width:1.3px;height:10px;background:#ababab;"></div>
<div class="a" style="left:0px;top:986px;width:1678px;height:1px;background:#d9d9d9;"></div><div class="a" style="left:0px;top:987px;width:1678px;height:23px;background:#eeeeee;"></div>
<svg style="left:14px;top:989px;" width="18" height="18" viewBox="0 0 18 18" fill="none" stroke-linecap="round" stroke-linejoin="round"><path d="M5.4 3.6V2.8A0.6 0.6 0 0 1 6 2.2H14.2A0.6 0.6 0 0 1 14.8 2.8V12.4A0.6 0.6 0 0 1 14.2 13H13.2" stroke="#9a9a9a" stroke-width="1"/><rect x="2.6" y="4.6" width="10" height="10.4" rx="0.8" stroke="#333" stroke-width="1.2"/><path d="M6.8 8.2V11H9.4" stroke="#333" stroke-width="1.3"/></svg>
<svg style="left:45px;top:989px;" width="18" height="18" viewBox="0 0 18 18" fill="none" stroke-linecap="round" stroke-linejoin="round"><text x="1.6" y="8" font-family="Liberation Mono" font-weight="bold" font-size="6.4" fill="#333" letter-spacing="-0.6">VB</text><path d="M10 3.4H15.4V6.6H12.4M12 3.4V13.6A1.2 1.2 0 0 1 10.8 14.8H4.4A1.2 1.2 0 0 1 3.2 13.6V12.2H9.2V14.6M4.6 12.2V10.6" stroke="#333" stroke-width="1.2"/></svg>
<svg style="left:78px;top:989px;" width="18" height="18" viewBox="0 0 18 18" fill="none" stroke-linecap="round" stroke-linejoin="round"><path d="M13.6 5V3.8A0.8 0.8 0 0 0 12.8 3H3A0.8 0.8 0 0 0 2.2 3.8V14.2A0.8 0.8 0 0 0 3 15H6.6" stroke="#333" stroke-width="1.2"/><path d="M9.2 8.6H15.4M9.2 11.7H15.4M9.2 14.6H15.4" stroke="#333" stroke-width="1.2"/></svg>
<svg style="left:1128px;top:989px;" width="20" height="18" viewBox="0 0 20 18" fill="none" stroke-linecap="round" stroke-linejoin="round"><path d="M9 14.6H3.2A1 1 0 0 1 2.2 13.6V3.4A1 1 0 0 1 3.2 2.4H16.8A1 1 0 0 1 17.8 3.4V9" stroke="#333" stroke-width="1.2"/><path d="M2.2 6.2H17.8M2.2 10.4H9M6.6 2.4V14.6" stroke="#333" stroke-width="1.2"/><path d="M14 9.8L17.4 11.6V15L14 16.8L10.6 15V11.6Z" stroke="#333" stroke-width="1.1"/><circle cx="14" cy="13.3" r="1.3" stroke="#333" stroke-width="1"/></svg>
<svg style="left:1164px;top:989px;" width="18" height="18" viewBox="0 0 18 18" fill="none" stroke-linecap="round" stroke-linejoin="round"><rect x="6" y="2.2" width="6" height="4" rx="0.8" stroke="#333" stroke-width="1.2"/><rect x="6" y="12" width="6" height="4" rx="0.8" stroke="#333" stroke-width="1.2"/><rect x="2.2" y="6.2" width="4" height="6" rx="0.8" stroke="#333" stroke-width="1.2"/><rect x="11.8" y="6.2" width="4" height="6" rx="0.8" stroke="#333" stroke-width="1.2"/><rect x="6.2" y="6.2" width="5.6" height="5.8" stroke="#333" stroke-width="1.2"/></svg>
<svg style="left:1184.2px;top:996.2px;" width="8" height="5.2" viewBox="0 0 8 5.2" fill="none" stroke-linecap="round" stroke-linejoin="round"><path d="M1 1L4.0 4.2L7 1" stroke="#333" stroke-width="1.3"/></svg>
<div class="a" style="left:1206px;top:991px;width:1px;height:14px;background:#d0d0d0;"></div>
<svg style="left:1219px;top:989px;" width="18" height="18" viewBox="0 0 18 18" fill="none" stroke-linecap="round" stroke-linejoin="round"><path d="M7 5.6V3.4A1 1 0 0 1 8 2.4H14.6A1 1 0 0 1 15.6 3.4V15A1 1 0 0 1 14.6 16H8A1 1 0 0 1 7 15V11.6" stroke="#333" stroke-width="1.2"/><path d="M1.6 8.6H10.4M7.6 5.8L10.4 8.6L7.6 11.4" stroke="#24324f" stroke-width="1.2"/><path d="M7.2 13.6H15.4M11.3 14.4V14.8" stroke="#333" stroke-width="1.1"/></svg>
<div class="a" style="left:1247px;top:987px;width:24px;height:22px;background:#dcdcdc;border-radius:3px"></div>
<svg style="left:1250px;top:989px;" width="18" height="18" viewBox="0 0 18 18" fill="none" stroke-linecap="round" stroke-linejoin="round"><rect x="3.2" y="3.2" width="12" height="11.8" stroke="#333" stroke-width="1.3"/><path d="M3.2 6.8H15.2M6.8 6.8V15" stroke="#333" stroke-width="1.3"/></svg>
<svg style="left:1282px;top:989px;" width="18" height="18" viewBox="0 0 18 18" fill="none" stroke-linecap="round" stroke-linejoin="round"><rect x="3.2" y="3.2" width="12" height="11.8" rx="0.6" stroke="#333" stroke-width="1.3"/><path d="M9.2 3.2V15" stroke="#333" stroke-width="1.3"/></svg>
<svg style="left:1314px;top:989px;" width="18" height="18" viewBox="0 0 18 18" fill="none" stroke-linecap="round" stroke-linejoin="round"><rect x="3.6" y="3.4" width="9.4" height="7.4" rx="0.8" stroke="#333" stroke-width="1.2"/><path d="M14.4 3.2A0.8 0.8 0 0 1 15.4 4V13.6A0.8 0.8 0 0 1 14.6 14.4H4.4A0.8 0.8 0 0 1 3.6 13.6V12.4" stroke="#333" stroke-width="1.2"/></svg>
<svg style="left:1348px;top:990px;" width="18" height="16" viewBox="0 0 18 16" fill="none" stroke-linecap="round" stroke-linejoin="round"><path d="M1.6 8C3.6 4.6 6 3 9 3S14.4 4.6 16.4 8C14.4 11.4 12 13 9 13S3.6 11.4 1.6 8Z" stroke="#333" stroke-width="1.2"/><circle cx="9" cy="8" r="2.4" stroke="#333" stroke-width="1.2"/></svg>
<svg style="left:1369px;top:996.2px;" width="8" height="5.2" viewBox="0 0 8 5.2" fill="none" stroke-linecap="round" stroke-linejoin="round"><path d="M1 1L4.0 4.2L7 1" stroke="#333" stroke-width="1.3"/></svg>
<div class="a" style="left:1391px;top:991px;width:1px;height:14px;background:#d0d0d0;"></div>
<div class="t" style="left:1406.88px;top:992.42px;font-size:12.5px;color:#24324f;transform:scaleX(0.8950);">100%</div>
<svg style="left:1448px;top:996.2px;" width="8" height="5.2" viewBox="0 0 8 5.2" fill="none" stroke-linecap="round" stroke-linejoin="round"><path d="M1 1L4.0 4.2L7 1" stroke="#333" stroke-width="1.3"/></svg>
<div class="a" style="left:1470px;top:997.2px;width:12px;height:1.8px;background:#222;"></div>
<div class="a" style="left:1496px;top:997px;width:53px;height:2px;background:#2962d9;border-radius:1px"></div>
<div class="a" style="left:1549px;top:997.2px;width:53px;height:1.6px;background:#b8b8b8;border-radius:1px"></div>
<div class="a" style="left:1544px;top:993px;width:10px;height:10px;background:#8f8f8f;border:2px solid #fff;border-radius:50%;box-shadow:0 0 1px rgba(0,0,0,0.3)"></div>
<svg style="left:1615px;top:991px;" width="14" height="14" viewBox="0 0 14 14" fill="none" stroke-linecap="round" stroke-linejoin="round"><path d="M7 1.6V12.4M1.6 7H12.4" stroke="#222" stroke-width="1.9" stroke-linecap="butt"/></svg>
<svg style="left:1646px;top:989px;" width="18" height="18" viewBox="0 0 18 18" fill="none" stroke-linecap="round" stroke-linejoin="round"><path d="M2.4 6V3.4A1 1 0 0 1 3.4 2.4H6M12 2.4H14.6A1 1 0 0 1 15.6 3.4V6M15.6 12V14.6A1 1 0 0 1 14.6 15.6H12M6 15.6H3.4A1 1 0 0 1 2.4 14.6V12" stroke="#222" stroke-width="1.3"/><path d="M10.2 7.8L14.4 3.6M11.4 3.6H14.4V6.6M7.8 10.2L3.6 14.4M3.6 11.4V14.4H6.6" stroke="#222" stroke-width="1"/></svg>
<div class="a" style="left:0px;top:1010px;width:46px;height:1px;background:#111;"></div>
<div class="a" style="left:46px;top:1010px;width:287px;height:1px;background:#bdbdbd;"></div>
<div class="a" style="left:333px;top:1010px;width:297px;height:1px;background:#111;"></div>
<div class="a" style="left:630px;top:1010px;width:50px;height:1px;background:#e07a30;"></div>
<div class="a" style="left:680px;top:1010px;width:440px;height:1px;background:#111;"></div>
<div class="a" style="left:1120px;top:1010px;width:48px;height:1px;background:#9a9a9a;"></div>
<div class="a" style="left:1168px;top:1010px;width:510px;height:1px;background:#111;"></div><div class="t" style="left:1368.80px;top:919.07px;font-size:20px;color:rgba(110,110,110,0.45);">Activate Windows</div>
<div class="t" style="left:1369.08px;top:944.73px;font-size:14.5px;color:rgba(110,110,110,0.45);transform:scaleX(1.0324);">Go to Settings to activate Windows.</div>
</body></html>
